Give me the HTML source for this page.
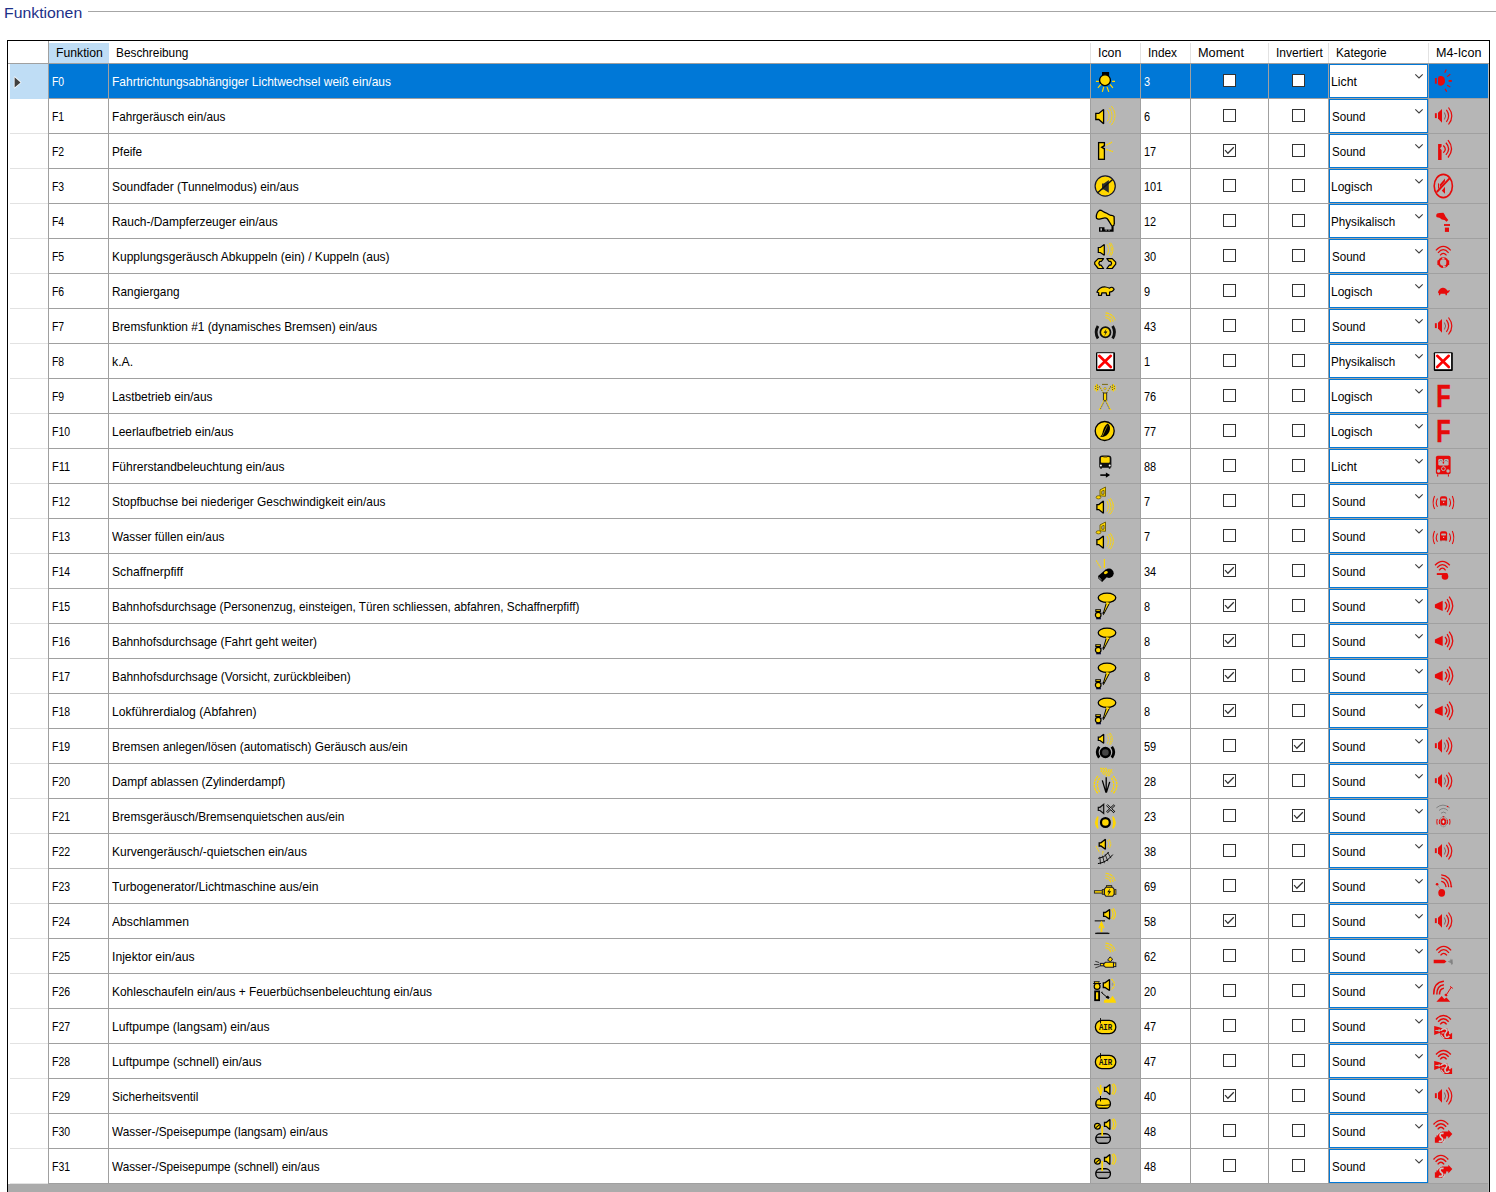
<!DOCTYPE html><html lang="de"><head><meta charset="utf-8"><title>Funktionen</title><style>
html,body{margin:0;padding:0;background:#fff}body{width:1496px;height:1192px;position:relative;overflow:hidden;font-family:"Liberation Sans",sans-serif;font-size:12.40px;color:#000}
.a,.t,svg{position:absolute}.t{white-space:nowrap;transform-origin:0 50%;display:block}.cb{position:absolute;width:11px;height:11px;border:1px solid #333;background:#fff}.cmb{position:absolute;left:1329px;width:97px;height:32px;border:1px solid #0078D7;background:#fff}
</style></head><body>
<span class="t" style="left:3.88px;top:-2.20px;height:30px;line-height:30px;transform:scaleX(1.0468);color:#1C3088;font-size:15.10px">Funktionen</span>
<div class="a" style="left:88px;top:11px;width:1408px;height:1px;background:#A6A6A6"></div>
<div class="a" style="left:7px;top:40px;width:1483px;height:1152px;background:#fff"></div>
<div class="a" style="left:8px;top:1184px;width:1480px;height:8px;background:#ABABAB"></div>
<div class="a" style="left:49px;top:43px;width:60px;height:20px;background:#BFDDF5"></div>
<div class="a" style="left:10px;top:64px;width:38px;height:35px;background:#BFDDF5"></div>
<div class="a" style="left:49px;top:64px;width:1439px;height:34px;background:#0078D7"></div>
<div class="a" style="left:1091px;top:99px;width:49px;height:1085px;background:#B6B6B6"></div>
<div class="a" style="left:1429px;top:99px;width:59px;height:1085px;background:#B6B6B6"></div>
<div class="a" style="left:1488px;top:64px;width:1px;height:1128px;background:#BBBBBB"></div>
<div class="a" style="left:8px;top:63px;width:1481px;height:1px;background:#A0A0A0"></div>
<div class="a" style="left:49px;top:98px;width:1439px;height:1px;background:#A0A0A0"></div>
<div class="a" style="left:10px;top:133px;width:38px;height:1px;background:#E2E2E2"></div>
<div class="a" style="left:49px;top:133px;width:1439px;height:1px;background:#A0A0A0"></div>
<div class="a" style="left:10px;top:168px;width:38px;height:1px;background:#E2E2E2"></div>
<div class="a" style="left:49px;top:168px;width:1439px;height:1px;background:#A0A0A0"></div>
<div class="a" style="left:10px;top:203px;width:38px;height:1px;background:#E2E2E2"></div>
<div class="a" style="left:49px;top:203px;width:1439px;height:1px;background:#A0A0A0"></div>
<div class="a" style="left:10px;top:238px;width:38px;height:1px;background:#E2E2E2"></div>
<div class="a" style="left:49px;top:238px;width:1439px;height:1px;background:#A0A0A0"></div>
<div class="a" style="left:10px;top:273px;width:38px;height:1px;background:#E2E2E2"></div>
<div class="a" style="left:49px;top:273px;width:1439px;height:1px;background:#A0A0A0"></div>
<div class="a" style="left:10px;top:308px;width:38px;height:1px;background:#E2E2E2"></div>
<div class="a" style="left:49px;top:308px;width:1439px;height:1px;background:#A0A0A0"></div>
<div class="a" style="left:10px;top:343px;width:38px;height:1px;background:#E2E2E2"></div>
<div class="a" style="left:49px;top:343px;width:1439px;height:1px;background:#A0A0A0"></div>
<div class="a" style="left:10px;top:378px;width:38px;height:1px;background:#E2E2E2"></div>
<div class="a" style="left:49px;top:378px;width:1439px;height:1px;background:#A0A0A0"></div>
<div class="a" style="left:10px;top:413px;width:38px;height:1px;background:#E2E2E2"></div>
<div class="a" style="left:49px;top:413px;width:1439px;height:1px;background:#A0A0A0"></div>
<div class="a" style="left:10px;top:448px;width:38px;height:1px;background:#E2E2E2"></div>
<div class="a" style="left:49px;top:448px;width:1439px;height:1px;background:#A0A0A0"></div>
<div class="a" style="left:10px;top:483px;width:38px;height:1px;background:#E2E2E2"></div>
<div class="a" style="left:49px;top:483px;width:1439px;height:1px;background:#A0A0A0"></div>
<div class="a" style="left:10px;top:518px;width:38px;height:1px;background:#E2E2E2"></div>
<div class="a" style="left:49px;top:518px;width:1439px;height:1px;background:#A0A0A0"></div>
<div class="a" style="left:10px;top:553px;width:38px;height:1px;background:#E2E2E2"></div>
<div class="a" style="left:49px;top:553px;width:1439px;height:1px;background:#A0A0A0"></div>
<div class="a" style="left:10px;top:588px;width:38px;height:1px;background:#E2E2E2"></div>
<div class="a" style="left:49px;top:588px;width:1439px;height:1px;background:#A0A0A0"></div>
<div class="a" style="left:10px;top:623px;width:38px;height:1px;background:#E2E2E2"></div>
<div class="a" style="left:49px;top:623px;width:1439px;height:1px;background:#A0A0A0"></div>
<div class="a" style="left:10px;top:658px;width:38px;height:1px;background:#E2E2E2"></div>
<div class="a" style="left:49px;top:658px;width:1439px;height:1px;background:#A0A0A0"></div>
<div class="a" style="left:10px;top:693px;width:38px;height:1px;background:#E2E2E2"></div>
<div class="a" style="left:49px;top:693px;width:1439px;height:1px;background:#A0A0A0"></div>
<div class="a" style="left:10px;top:728px;width:38px;height:1px;background:#E2E2E2"></div>
<div class="a" style="left:49px;top:728px;width:1439px;height:1px;background:#A0A0A0"></div>
<div class="a" style="left:10px;top:763px;width:38px;height:1px;background:#E2E2E2"></div>
<div class="a" style="left:49px;top:763px;width:1439px;height:1px;background:#A0A0A0"></div>
<div class="a" style="left:10px;top:798px;width:38px;height:1px;background:#E2E2E2"></div>
<div class="a" style="left:49px;top:798px;width:1439px;height:1px;background:#A0A0A0"></div>
<div class="a" style="left:10px;top:833px;width:38px;height:1px;background:#E2E2E2"></div>
<div class="a" style="left:49px;top:833px;width:1439px;height:1px;background:#A0A0A0"></div>
<div class="a" style="left:10px;top:868px;width:38px;height:1px;background:#E2E2E2"></div>
<div class="a" style="left:49px;top:868px;width:1439px;height:1px;background:#A0A0A0"></div>
<div class="a" style="left:10px;top:903px;width:38px;height:1px;background:#E2E2E2"></div>
<div class="a" style="left:49px;top:903px;width:1439px;height:1px;background:#A0A0A0"></div>
<div class="a" style="left:10px;top:938px;width:38px;height:1px;background:#E2E2E2"></div>
<div class="a" style="left:49px;top:938px;width:1439px;height:1px;background:#A0A0A0"></div>
<div class="a" style="left:10px;top:973px;width:38px;height:1px;background:#E2E2E2"></div>
<div class="a" style="left:49px;top:973px;width:1439px;height:1px;background:#A0A0A0"></div>
<div class="a" style="left:10px;top:1008px;width:38px;height:1px;background:#E2E2E2"></div>
<div class="a" style="left:49px;top:1008px;width:1439px;height:1px;background:#A0A0A0"></div>
<div class="a" style="left:10px;top:1043px;width:38px;height:1px;background:#E2E2E2"></div>
<div class="a" style="left:49px;top:1043px;width:1439px;height:1px;background:#A0A0A0"></div>
<div class="a" style="left:10px;top:1078px;width:38px;height:1px;background:#E2E2E2"></div>
<div class="a" style="left:49px;top:1078px;width:1439px;height:1px;background:#A0A0A0"></div>
<div class="a" style="left:10px;top:1113px;width:38px;height:1px;background:#E2E2E2"></div>
<div class="a" style="left:49px;top:1113px;width:1439px;height:1px;background:#A0A0A0"></div>
<div class="a" style="left:10px;top:1148px;width:38px;height:1px;background:#E2E2E2"></div>
<div class="a" style="left:49px;top:1148px;width:1439px;height:1px;background:#A0A0A0"></div>
<div class="a" style="left:10px;top:1183px;width:38px;height:1px;background:#E2E2E2"></div>
<div class="a" style="left:49px;top:1183px;width:1439px;height:1px;background:#A0A0A0"></div>
<div class="a" style="left:48px;top:41px;width:1px;height:1143px;background:#A0A0A0"></div>
<div class="a" style="left:108px;top:63px;width:1px;height:1121px;background:#A0A0A0"></div>
<div class="a" style="left:1090px;top:43px;width:1px;height:20px;background:#E2E2E2"></div>
<div class="a" style="left:1090px;top:63px;width:1px;height:1121px;background:#A0A0A0"></div>
<div class="a" style="left:1140px;top:43px;width:1px;height:20px;background:#E2E2E2"></div>
<div class="a" style="left:1140px;top:63px;width:1px;height:1121px;background:#A0A0A0"></div>
<div class="a" style="left:1190px;top:43px;width:1px;height:20px;background:#E2E2E2"></div>
<div class="a" style="left:1190px;top:63px;width:1px;height:1121px;background:#A0A0A0"></div>
<div class="a" style="left:1268px;top:43px;width:1px;height:20px;background:#E2E2E2"></div>
<div class="a" style="left:1268px;top:63px;width:1px;height:1121px;background:#A0A0A0"></div>
<div class="a" style="left:1328px;top:43px;width:1px;height:20px;background:#E2E2E2"></div>
<div class="a" style="left:1328px;top:63px;width:1px;height:1121px;background:#A0A0A0"></div>
<div class="a" style="left:1428px;top:43px;width:1px;height:20px;background:#E2E2E2"></div>
<div class="a" style="left:1428px;top:63px;width:1px;height:1121px;background:#A0A0A0"></div>
<div class="a" style="left:7px;top:40px;width:1483px;height:1px;background:#000"></div>
<div class="a" style="left:7px;top:40px;width:1px;height:1152px;background:#000"></div>
<div class="a" style="left:1489px;top:40px;width:1px;height:1152px;background:#000"></div>
<span class="t" style="left:55.98px;top:41.70px;height:22px;line-height:22px;transform:scaleX(0.9849)">Funktion</span>
<span class="t" style="left:115.51px;top:41.70px;height:22px;line-height:22px;transform:scaleX(0.9543)">Beschreibung</span>
<span class="t" style="left:1097.97px;top:41.70px;height:22px;line-height:22px;transform:scaleX(1.0000)">Icon</span>
<span class="t" style="left:1147.61px;top:41.70px;height:22px;line-height:22px;transform:scaleX(0.9574)">Index</span>
<span class="t" style="left:1197.74px;top:41.70px;height:22px;line-height:22px;transform:scaleX(1.0263)">Moment</span>
<span class="t" style="left:1276.20px;top:41.70px;height:22px;line-height:22px;transform:scaleX(0.9698)">Invertiert</span>
<span class="t" style="left:1336.42px;top:41.70px;height:22px;line-height:22px;transform:scaleX(0.9523)">Kategorie</span>
<span class="t" style="left:1435.75px;top:41.70px;height:22px;line-height:22px;transform:scaleX(1.0138)">M4-Icon</span>
<svg style="left:8px;top:64px" width="40" height="35" viewBox="0 0 40 35"><polygon points="6.6,13.2 12.5,18.4 6.6,23.6" fill="#404040" stroke="#f4f9fd" stroke-width="1.6" paint-order="stroke" stroke-linejoin="round"/></svg>
<span class="t" style="left:51.83px;top:65.00px;height:34px;line-height:34px;transform:scaleX(0.8412);color:#fff">F0</span>
<span class="t" style="left:111.80px;top:65.00px;height:34px;line-height:34px;transform:scaleX(0.9667);color:#fff">Fahrtrichtungsabhängiger Lichtwechsel weiß ein/aus</span>
<span class="t" style="left:1144.1px;top:65.00px;height:34px;line-height:34px;transform:scaleX(0.885);color:#fff">3</span>
<div class="cb" style="left:1223px;top:74px"></div>
<div class="cb" style="left:1292px;top:74px"></div>
<div class="cmb" style="top:64px"></div>
<span class="t" style="left:1330.58px;top:65.00px;height:34px;line-height:34px;transform:scaleX(0.9871)">Licht</span>
<svg style="left:1412px;top:72px" width="14" height="10" viewBox="0 0 14 10"><path d="M3.3,2.3L7,6L10.7,2.3" fill="none" stroke="#404040" stroke-width="1.12"/></svg>
<svg style="left:1090px;top:64px" width="50" height="35" viewBox="0 0 50 35"><rect x="12" y="8" width="7.1" height="4.2" fill="#000"/><circle cx="15" cy="16.2" r="5.4" fill="#FFD700" stroke="#000" stroke-width="1.3"/><path d="M5.9,17.4H8.9M22,17.4H25M10.9,20.3L7.9,23.9M20,20.3L22.9,23.9M13.8,22.9L12.3,27.9M17,22.9L18.8,27.9" stroke="#FFD700" stroke-width="1.2" fill="none"/></svg>
<svg style="left:1428px;top:64px" width="59" height="35" viewBox="0 0 59 35"><rect x="6.9" y="14" width="1.9" height="5.7" fill="#E60A0A"/><path d="M10,14.2 Q10,12 12.4,12 H13.2 Q17,12.6 17,16.85 Q17,21.1 13.2,21.7 H12.4 Q10,21.7 10,19.5Z" fill="#E60A0A"/><path d="M16.7,8.8L18.3,5.6M19.1,12.6L22.3,10.3M19.1,21.2L22.3,22.9M17,24.7L18.7,27.6" stroke="#E60A0A" stroke-width="1.15" fill="none"/><path d="M20.6,16.9H23.8" stroke="#E60A0A" stroke-width="1.9"/></svg>
<span class="t" style="left:51.83px;top:100.00px;height:34px;line-height:34px;transform:scaleX(0.8412)">F1</span>
<span class="t" style="left:111.82px;top:100.00px;height:34px;line-height:34px;transform:scaleX(0.9459)">Fahrgeräusch ein/aus</span>
<span class="t" style="left:1144.1px;top:100.00px;height:34px;line-height:34px;transform:scaleX(0.885)">6</span>
<div class="cb" style="left:1223px;top:109px"></div>
<div class="cb" style="left:1292px;top:109px"></div>
<div class="cmb" style="top:99px"></div>
<span class="t" style="left:1331.60px;top:100.00px;height:34px;line-height:34px;transform:scaleX(0.9336)">Sound</span>
<svg style="left:1412px;top:107px" width="14" height="10" viewBox="0 0 14 10"><path d="M3.3,2.3L7,6L10.7,2.3" fill="none" stroke="#404040" stroke-width="1.12"/></svg>
<svg style="left:1090px;top:99px" width="50" height="35" viewBox="0 0 50 35"><polygon points="5.8,14.4 8.8,14.4 13.6,10.4 13.6,24.7 8.8,20.5 5.8,20.5" fill="#FFD700" stroke="#000" stroke-width="1.3" stroke-linejoin="miter" stroke-miterlimit="1.6"/><path d="M17.3,11.1 Q20.9,16.7 17.3,22.3 M19.4,8.8 Q24.6,16.5 19.4,24.3 M21.4,7 Q28.6,16.5 21.4,26.1" fill="none" stroke="#FFD700" stroke-width="0.9" stroke-dasharray="4 0.5"/></svg>
<svg style="left:1428px;top:99px" width="59" height="35" viewBox="0 0 59 35"><rect x="6.9" y="14.2" width="1.9" height="4.9" fill="#E60A0A"/><polygon points="10,13.8 14,9.9 14,23.8 10,19.6" fill="#E60A0A"/><path d="M16.4,13.5 Q18.8,17 16.4,20.5" fill="none" stroke="#7c4444" stroke-width=".8"/><path d="M18.4,10.8 Q22.8,16.85 18.4,22.9 M20.5,8.5 Q27.1,17 20.5,25.5" fill="none" stroke="#E60A0A" stroke-width="1.2"/></svg>
<span class="t" style="left:51.83px;top:135.00px;height:34px;line-height:34px;transform:scaleX(0.8412)">F2</span>
<span class="t" style="left:111.82px;top:135.00px;height:34px;line-height:34px;transform:scaleX(0.9516)">Pfeife</span>
<span class="t" style="left:1144.1px;top:135.00px;height:34px;line-height:34px;transform:scaleX(0.885)">17</span>
<div class="cb" style="left:1223px;top:144px"><svg style="left:0;top:0" width="11" height="11" viewBox="0 0 11 11"><path d="M1.1,5.2L3.9,8.3L9.8,2.3" fill="none" stroke="#333" stroke-width="1.25"/></svg></div>
<div class="cb" style="left:1292px;top:144px"></div>
<div class="cmb" style="top:134px"></div>
<span class="t" style="left:1331.60px;top:135.00px;height:34px;line-height:34px;transform:scaleX(0.9336)">Sound</span>
<svg style="left:1412px;top:142px" width="14" height="10" viewBox="0 0 14 10"><path d="M3.3,2.3L7,6L10.7,2.3" fill="none" stroke="#404040" stroke-width="1.12"/></svg>
<svg style="left:1090px;top:134px" width="50" height="35" viewBox="0 0 50 35"><rect x="8.6" y="8.6" width="5.8" height="16.7" fill="#FFD700" stroke="#000" stroke-width="1.3"/><polygon points="15,10.5 10.4,13.2 15,15.9" fill="#000"/><polygon points="15.2,12.2 13,13.2 15.2,14.3" fill="#B6B6B6"/><path d="M16.2,11.2L22,8.2M16.2,15.4L22.9,17.6" stroke="#FFD700" stroke-width="1.3" stroke-dasharray="2.2 0.6" fill="none"/></svg>
<svg style="left:1428px;top:134px" width="59" height="35" viewBox="0 0 59 35"><path d="M10.1,10H13.6V12.6L12,14.2L13.6,16V25.9H10.1Z" fill="#E60A0A"/><path d="M15.3,11.5 Q19.3,15.2 15.3,18.8 M17.9,8.8 Q23.3,14.8 17.9,20.9 M20,6.2 Q27,14.8 20,23.5" fill="none" stroke="#E60A0A" stroke-width="1.3"/></svg>
<span class="t" style="left:51.83px;top:170.00px;height:34px;line-height:34px;transform:scaleX(0.8412)">F3</span>
<span class="t" style="left:111.80px;top:170.00px;height:34px;line-height:34px;transform:scaleX(0.9636)">Soundfader (Tunnelmodus) ein/aus</span>
<span class="t" style="left:1144.1px;top:170.00px;height:34px;line-height:34px;transform:scaleX(0.885)">101</span>
<div class="cb" style="left:1223px;top:179px"></div>
<div class="cb" style="left:1292px;top:179px"></div>
<div class="cmb" style="top:169px"></div>
<span class="t" style="left:1330.60px;top:170.00px;height:34px;line-height:34px;transform:scaleX(0.9702)">Logisch</span>
<svg style="left:1412px;top:177px" width="14" height="10" viewBox="0 0 14 10"><path d="M3.3,2.3L7,6L10.7,2.3" fill="none" stroke="#404040" stroke-width="1.12"/></svg>
<svg style="left:1090px;top:169px" width="50" height="35" viewBox="0 0 50 35"><circle cx="15.2" cy="17" r="10.1" fill="#FFD700" stroke="#16162a" stroke-width="1.2"/><polygon points="12,14.4 13.8,14.4 18.8,11.1 18.8,23.7 13.8,20.5 12,20.5" fill="#2a2a2a"/><path d="M22.6,10.5L7.4,24" stroke="#111" stroke-width="1.5"/></svg>
<svg style="left:1428px;top:169px" width="59" height="35" viewBox="0 0 59 35"><polygon points="11.8,15.4 17,9.6 17,24.8 11.8,19.8" fill="#E60A0A"/><rect x="10" y="14.4" width="1" height="5.2" fill="#E60A0A"/><path d="M22.6,8.2L9.8,23.8" stroke="#B6B6B6" stroke-width="3.4"/><path d="M21.8,9.2L8.8,23" stroke="#E60A0A" stroke-width="1.9"/><ellipse cx="15.3" cy="17" rx="9.1" ry="11.6" fill="none" stroke="#E60A0A" stroke-width="1.6"/></svg>
<span class="t" style="left:51.83px;top:205.00px;height:34px;line-height:34px;transform:scaleX(0.8412)">F4</span>
<span class="t" style="left:111.81px;top:205.00px;height:34px;line-height:34px;transform:scaleX(0.9625)">Rauch-/Dampferzeuger ein/aus</span>
<span class="t" style="left:1144.1px;top:205.00px;height:34px;line-height:34px;transform:scaleX(0.885)">12</span>
<div class="cb" style="left:1223px;top:214px"></div>
<div class="cb" style="left:1292px;top:214px"></div>
<div class="cmb" style="top:204px"></div>
<span class="t" style="left:1330.63px;top:205.00px;height:34px;line-height:34px;transform:scaleX(0.9409)">Physikalisch</span>
<svg style="left:1412px;top:212px" width="14" height="10" viewBox="0 0 14 10"><path d="M3.3,2.3L7,6L10.7,2.3" fill="none" stroke="#404040" stroke-width="1.12"/></svg>
<svg style="left:1090px;top:204px" width="50" height="35" viewBox="0 0 50 35"><path d="M9.7,6.2 C7.5,7.5 6.3,10 6.3,13 C6.2,15.2 8,15.3 10.6,14.8 C13.5,14.2 15.2,13 17,14.5 C19,16.5 20.2,20 22.3,22.4 C23.5,22 24.4,21 24.3,19.4 L24.1,12.6 C23,11.3 21.8,11.6 20.3,11.2 C18.5,10.6 17.5,9.3 15.9,8.8 C13.5,8.2 11.8,6 9.7,6.2Z" fill="#FFD700" stroke="#000" stroke-width="1.3"/><path d="M8.2,23.2H14.5V25.6H21.5V22.6H23.6V27.7H9V23.2Z" fill="#000"/><rect x="10.4" y="24.3" width="1.6" height="2.3" fill="#B6B6B6"/><rect x="15.5" y="25.6" width="1.3" height="1" fill="#B6B6B6"/><rect x="18.4" y="25.6" width="1.3" height="1" fill="#B6B6B6"/></svg>
<svg style="left:1428px;top:204px" width="59" height="35" viewBox="0 0 59 35"><path d="M8.2,11.4 C8.4,9.6 9.6,9 11.5,8.9 L15.3,8.8 C16.6,10 17,11.6 17.7,12.8 C18.6,14 19.6,14.9 20.3,15.9 L18.5,17.7 C17.6,17 17.2,16.2 16.4,15.9 L13.8,15.6 C12.8,15 12.2,14.2 11.4,13.8 L8.9,13.2 C8.3,12.6 8.1,12 8.2,11.4Z" fill="#E60A0A"/><rect x="16" y="20.1" width="6" height="1.8" fill="#E60A0A"/><rect x="16.9" y="23.6" width="4.1" height="4.3" fill="#E60A0A"/></svg>
<span class="t" style="left:51.83px;top:240.00px;height:34px;line-height:34px;transform:scaleX(0.8412)">F5</span>
<span class="t" style="left:111.80px;top:240.00px;height:34px;line-height:34px;transform:scaleX(0.9688)">Kupplungsgeräusch Abkuppeln (ein) / Kuppeln (aus)</span>
<span class="t" style="left:1144.1px;top:240.00px;height:34px;line-height:34px;transform:scaleX(0.885)">30</span>
<div class="cb" style="left:1223px;top:249px"></div>
<div class="cb" style="left:1292px;top:249px"></div>
<div class="cmb" style="top:239px"></div>
<span class="t" style="left:1331.60px;top:240.00px;height:34px;line-height:34px;transform:scaleX(0.9336)">Sound</span>
<svg style="left:1412px;top:247px" width="14" height="10" viewBox="0 0 14 10"><path d="M3.3,2.3L7,6L10.7,2.3" fill="none" stroke="#404040" stroke-width="1.12"/></svg>
<svg style="left:1090px;top:239px" width="50" height="35" viewBox="0 0 50 35"><polygon points="8.3,8.5 10.3,8.5 14.3,5.6 14.3,16.3 10.3,13.5 8.3,13.5" fill="#FFD700" stroke="#000" stroke-width="1.2" stroke-linejoin="miter" stroke-miterlimit="1.6"/><path d="M17.2,5.5 Q19.6,10.5 17.2,15.6 M19.2,4.2 Q23.4,10.5 19.2,16.9 M20.6,3.8 Q25.4,10.5 20.6,17.3" fill="none" stroke="#FFD700" stroke-width="1.0" stroke-dasharray="4 0.5"/><path d="M13.6,19.6H8.2L4.7,23.2V25.2L8.2,29.5H13.6L11,26.2H9.6L8.8,24.2L9.6,22.4H11.4Z" fill="#FFD700" stroke="#000" stroke-width="1.2" stroke-linejoin="round"/><path d="M16.8,19.6H22.2L25.7,23.2V25.2L22.2,29.5H16.8L19.4,26.2H20.8L21.6,24.2L20.8,22.4H19Z" fill="#FFD700" stroke="#000" stroke-width="1.2" stroke-linejoin="round"/></svg>
<svg style="left:1428px;top:239px" width="59" height="35" viewBox="0 0 59 35"><path d="M7.9,11.4 Q15.3,3.4 22.700000000000003,11.4 M10.0,13.8 Q15.3,7.6 20.6,13.8 M12.100000000000001,16.4 Q15.3,12.2 18.5,16.4" fill="none" stroke="#E60A0A" stroke-width="1.2"/><circle cx="15.3" cy="23.6" r="4.4" fill="none" stroke="#E60A0A" stroke-width="2.2"/><rect x="9.4" y="21.4" width="2.6" height="4.6" fill="#E60A0A"/><rect x="18.6" y="21.4" width="2.6" height="4.6" fill="#E60A0A"/><rect x="14.2" y="18.6" width="2.2" height="1.6" fill="#B6B6B6"/><rect x="15" y="26.8" width="2.6" height="1.8" fill="#B6B6B6"/></svg>
<span class="t" style="left:51.83px;top:275.00px;height:34px;line-height:34px;transform:scaleX(0.8412)">F6</span>
<span class="t" style="left:111.82px;top:275.00px;height:34px;line-height:34px;transform:scaleX(0.9519)">Rangiergang</span>
<span class="t" style="left:1144.1px;top:275.00px;height:34px;line-height:34px;transform:scaleX(0.885)">9</span>
<div class="cb" style="left:1223px;top:284px"></div>
<div class="cb" style="left:1292px;top:284px"></div>
<div class="cmb" style="top:274px"></div>
<span class="t" style="left:1330.60px;top:275.00px;height:34px;line-height:34px;transform:scaleX(0.9702)">Logisch</span>
<svg style="left:1412px;top:282px" width="14" height="10" viewBox="0 0 14 10"><path d="M3.3,2.3L7,6L10.7,2.3" fill="none" stroke="#404040" stroke-width="1.12"/></svg>
<svg style="left:1090px;top:274px" width="50" height="35" viewBox="0 0 50 35"><path d="M6.9,18.2 C7.6,16.2 8.6,15 10,14.2 C12,13 14,12.9 15.5,13 C17.2,13.1 18.6,13.7 19.6,14.2 C20.3,13.5 21.2,13.1 22,13.3 C23.2,13.6 24,14.6 24.1,15.4 C23.4,16.6 22.6,17.3 21.6,17.7 L19.5,18.2 L19.7,21.3 H16.6 L16.2,18.9 H11.8 L11.5,21.3 H8.5 L8.8,18.8 Z" fill="#FFD700" stroke="#000" stroke-width="1.2" stroke-linejoin="round"/></svg>
<svg style="left:1428px;top:274px" width="59" height="35" viewBox="0 0 59 35"><path d="M10,18.5 C10.4,16.8 11,15.8 12,15 C13.4,14 14.4,13.8 15.2,13.8 C16.6,13.9 17.6,14.5 18.3,15.2 L19.6,16.7 L22,16.1 L21,18.2 L19.2,19.2 L18.8,21.2 H17.6 L17.3,19.7 H12.6 L12,21.2 H10.9 L10.9,19.4Z" fill="#E60A0A"/></svg>
<span class="t" style="left:51.83px;top:310.00px;height:34px;line-height:34px;transform:scaleX(0.8412)">F7</span>
<span class="t" style="left:111.81px;top:310.00px;height:34px;line-height:34px;transform:scaleX(0.9580)">Bremsfunktion #1 (dynamisches Bremsen) ein/aus</span>
<span class="t" style="left:1144.1px;top:310.00px;height:34px;line-height:34px;transform:scaleX(0.885)">43</span>
<div class="cb" style="left:1223px;top:319px"></div>
<div class="cb" style="left:1292px;top:319px"></div>
<div class="cmb" style="top:309px"></div>
<span class="t" style="left:1331.60px;top:310.00px;height:34px;line-height:34px;transform:scaleX(0.9336)">Sound</span>
<svg style="left:1412px;top:317px" width="14" height="10" viewBox="0 0 14 10"><path d="M3.3,2.3L7,6L10.7,2.3" fill="none" stroke="#404040" stroke-width="1.12"/></svg>
<svg style="left:1090px;top:309px" width="50" height="35" viewBox="0 0 50 35"><path d="M15.6,3.9 Q22.8,4.6 25.3,11.4 M15.4,6.4 Q21.2,6.8 23.2,12.6 M15.4,8.8 Q19.6,9.2 21.2,13.5" fill="none" stroke="#FFD700" stroke-width="1.15" stroke-dasharray="3.5 0.5" opacity=".9"/><circle cx="15.4" cy="23.2" r="5.1" fill="#FFD700" stroke="#111" stroke-width="1.7"/><path d="M16.6,19.4L13.6,23.7H15.5L14.2,27.2L17.4,22.6H15.4Z" fill="#111"/><path d="M8,17 Q4.2,23.2 8,29.4" fill="none" stroke="#111" stroke-width="2.8"/><path d="M22.6,17 Q26.4,23.2 22.6,29.4" fill="none" stroke="#111" stroke-width="2.8"/></svg>
<svg style="left:1428px;top:309px" width="59" height="35" viewBox="0 0 59 35"><rect x="6.9" y="14.2" width="1.9" height="4.9" fill="#E60A0A"/><polygon points="10,13.8 14,9.9 14,23.8 10,19.6" fill="#E60A0A"/><path d="M16.4,13.5 Q18.8,17 16.4,20.5" fill="none" stroke="#7c4444" stroke-width=".8"/><path d="M18.4,10.8 Q22.8,16.85 18.4,22.9 M20.5,8.5 Q27.1,17 20.5,25.5" fill="none" stroke="#E60A0A" stroke-width="1.2"/></svg>
<span class="t" style="left:51.83px;top:345.00px;height:34px;line-height:34px;transform:scaleX(0.8412)">F8</span>
<span class="t" style="left:111.77px;top:345.00px;height:34px;line-height:34px;transform:scaleX(0.9932)">k.A.</span>
<span class="t" style="left:1144.1px;top:345.00px;height:34px;line-height:34px;transform:scaleX(0.885)">1</span>
<div class="cb" style="left:1223px;top:354px"></div>
<div class="cb" style="left:1292px;top:354px"></div>
<div class="cmb" style="top:344px"></div>
<span class="t" style="left:1330.63px;top:345.00px;height:34px;line-height:34px;transform:scaleX(0.9409)">Physikalisch</span>
<svg style="left:1412px;top:352px" width="14" height="10" viewBox="0 0 14 10"><path d="M3.3,2.3L7,6L10.7,2.3" fill="none" stroke="#404040" stroke-width="1.12"/></svg>
<svg style="left:1090px;top:344px" width="50" height="35" viewBox="0 0 50 35"><rect x="6" y="8.2" width="19" height="18.8" rx="1" fill="#000"/><rect x="7.3" y="9.2" width="16" height="16" fill="#fff"/><path d="M9.2,11.8L20.8,23M20.8,11.8L9.2,23" stroke="#FF0000" stroke-width="2.6" stroke-linecap="round"/></svg>
<svg style="left:1428px;top:344px" width="59" height="35" viewBox="0 0 59 35"><rect x="5.8" y="8.2" width="19" height="18.8" rx="1" fill="#000"/><rect x="7.1" y="9.2" width="16" height="16" fill="#fff"/><path d="M9.2,11.8L20.8,23M20.8,11.8L9.2,23" stroke="#FF0000" stroke-width="2.6" stroke-linecap="round"/></svg>
<span class="t" style="left:51.83px;top:380.00px;height:34px;line-height:34px;transform:scaleX(0.8412)">F9</span>
<span class="t" style="left:111.81px;top:380.00px;height:34px;line-height:34px;transform:scaleX(0.9600)">Lastbetrieb ein/aus</span>
<span class="t" style="left:1144.1px;top:380.00px;height:34px;line-height:34px;transform:scaleX(0.885)">76</span>
<div class="cb" style="left:1223px;top:389px"></div>
<div class="cb" style="left:1292px;top:389px"></div>
<div class="cmb" style="top:379px"></div>
<span class="t" style="left:1330.60px;top:380.00px;height:34px;line-height:34px;transform:scaleX(0.9702)">Logisch</span>
<svg style="left:1412px;top:387px" width="14" height="10" viewBox="0 0 14 10"><path d="M3.3,2.3L7,6L10.7,2.3" fill="none" stroke="#404040" stroke-width="1.12"/></svg>
<svg style="left:1090px;top:379px" width="50" height="35" viewBox="0 0 50 35"><path d="M12,5.4H17.9" stroke="#7a6a10" stroke-width="1"/><path d="M5,6.6V11.4M6.6,5V12.6M8.2,6.2V11.6M21.8,6.2V11.6M23.4,5V12.6M25,6.6V11.4" stroke="#FFD700" stroke-width="1.15"/><path d="M5.7,6.8V11.2M7.4,5.6V12M22.6,5.6V12M24.3,6.8V11.2" stroke="#2a2a10" stroke-width=".7" stroke-dasharray="1.1 1.1"/><path d="M8.6,8.6L10,7.4M21.4,8.6L20,7.4" stroke="#333" stroke-width=".8"/><path d="M13.7,13.8L9.9,7.4M16.4,13.8L20.1,7.4" stroke="#FFD700" stroke-width="1.2" stroke-dasharray="1.3 0.9"/><path d="M13.3,14L9.5,7.6M16.8,14L20.5,7.6" stroke="#222" stroke-width="0.7" stroke-dasharray="1 1.2"/><circle cx="15" cy="9.6" r="1.2" fill="#FFD700" stroke="#777" stroke-width=".5"/><rect x="13.4" y="14" width="3.3" height="7.4" fill="#FFD700" stroke="#222" stroke-width=".9"/><path d="M14,21.4L9.6,30.2M16,21.4L20.2,30.2" stroke="#FFD700" stroke-width="1.3" stroke-dasharray="1.4 0.9"/><path d="M14.6,21.8L10.2,30.4M15.4,21.8L19.6,30.4" stroke="#222" stroke-width="0.8" stroke-dasharray="1 1.1"/><path d="M8.8,30.4H10.8M19.2,30.4H21.2" stroke="#FFD700" stroke-width="1"/></svg>
<svg style="left:1428px;top:379px" width="59" height="35" viewBox="0 0 59 35"><text x="8.2" y="28.2" font-family="Liberation Sans, sans-serif" font-weight="700" font-size="30.6" fill="#E60A0A" stroke="#E60A0A" stroke-width=".5" textLength="14.4" lengthAdjust="spacingAndGlyphs">F</text></svg>
<span class="t" style="left:51.83px;top:415.00px;height:34px;line-height:34px;transform:scaleX(0.8468)">F10</span>
<span class="t" style="left:111.80px;top:415.00px;height:34px;line-height:34px;transform:scaleX(0.9645)">Leerlaufbetrieb ein/aus</span>
<span class="t" style="left:1144.1px;top:415.00px;height:34px;line-height:34px;transform:scaleX(0.885)">77</span>
<div class="cb" style="left:1223px;top:424px"></div>
<div class="cb" style="left:1292px;top:424px"></div>
<div class="cmb" style="top:414px"></div>
<span class="t" style="left:1330.60px;top:415.00px;height:34px;line-height:34px;transform:scaleX(0.9702)">Logisch</span>
<svg style="left:1412px;top:422px" width="14" height="10" viewBox="0 0 14 10"><path d="M3.3,2.3L7,6L10.7,2.3" fill="none" stroke="#404040" stroke-width="1.12"/></svg>
<svg style="left:1090px;top:414px" width="50" height="35" viewBox="0 0 50 35"><circle cx="14.7" cy="17" r="9.5" fill="#FFD700" stroke="#000" stroke-width="1.3"/><path d="M17.7,9.5 C20.2,11.4 20.6,14.4 19.4,17.6 C18.2,20.6 15.6,22.6 12.8,23 L10,22.8 C11.6,21.6 12,20.2 12.6,18.4 C13.4,15.6 14,12 17.7,9.5Z" fill="#000"/><path d="M17.4,11.5L12.2,22.4" stroke="#FFD700" stroke-width=".5"/></svg>
<svg style="left:1428px;top:414px" width="59" height="35" viewBox="0 0 59 35"><text x="8.2" y="28.2" font-family="Liberation Sans, sans-serif" font-weight="700" font-size="30.6" fill="#E60A0A" stroke="#E60A0A" stroke-width=".5" textLength="14.4" lengthAdjust="spacingAndGlyphs">F</text></svg>
<span class="t" style="left:51.78px;top:450.00px;height:34px;line-height:34px;transform:scaleX(0.8913)">F11</span>
<span class="t" style="left:111.80px;top:450.00px;height:34px;line-height:34px;transform:scaleX(0.9706)">Führerstandbeleuchtung ein/aus</span>
<span class="t" style="left:1144.1px;top:450.00px;height:34px;line-height:34px;transform:scaleX(0.885)">88</span>
<div class="cb" style="left:1223px;top:459px"></div>
<div class="cb" style="left:1292px;top:459px"></div>
<div class="cmb" style="top:449px"></div>
<span class="t" style="left:1330.58px;top:450.00px;height:34px;line-height:34px;transform:scaleX(0.9871)">Licht</span>
<svg style="left:1412px;top:457px" width="14" height="10" viewBox="0 0 14 10"><path d="M3.3,2.3L7,6L10.7,2.3" fill="none" stroke="#404040" stroke-width="1.12"/></svg>
<svg style="left:1090px;top:449px" width="50" height="35" viewBox="0 0 50 35"><path d="M9.2,9.6 Q9.2,6.6 12.2,6.5 H18.4 Q21.4,6.6 21.4,9.6 V17.6 Q21.4,18.8 20.3,18.8 V19.8 H18.8 V18.8 H11.8 V19.8 H10.3 V18.8 Q9.2,18.8 9.2,17.6Z" fill="#111"/><rect x="10.9" y="8.1" width="8.8" height="5.6" rx=".8" fill="#FFD700"/><rect x="13.4" y="7.4" width="3.8" height="1.3" fill="#8a6a00"/><circle cx="10.9" cy="16.4" r="1" fill="#fff"/><circle cx="19.7" cy="16.4" r="1" fill="#fff"/><path d="M10.3,26.1H18.5" stroke="#000" stroke-width="1.6"/><polygon points="15.9,23.4 20.1,26.1 15.9,28.8" fill="#000"/></svg>
<svg style="left:1428px;top:449px" width="59" height="35" viewBox="0 0 59 35"><rect x="7.9" y="6.8" width="14.7" height="18.5" rx="1.8" fill="#E60A0A"/><rect x="10.3" y="10" width="10.3" height="6.5" rx="1.2" fill="#B6B6B6"/><polygon points="14.2,9.8 16.6,9.8 15.4,12.4" fill="#E60A0A"/><ellipse cx="15.4" cy="13.7" rx=".8" ry="1.1" fill="#E60A0A"/><path d="M11.2,12.6L12.8,11.2L14.2,12.4M16.6,12.4L18,11.2L19.7,12.6" fill="none" stroke="#6a6a6a" stroke-width=".7"/><circle cx="10.6" cy="22" r="1.7" fill="#B6B6B6"/><circle cx="20" cy="22" r="1.7" fill="#B6B6B6"/><circle cx="15.4" cy="19.7" r="1.9" fill="#E60A0A" stroke="#B6B6B6" stroke-width="1"/><path d="M15.4,16.6V17.6" stroke="#B6B6B6" stroke-width=".8"/><path d="M9.7,25.3V27.6M20.4,25.3V27.6" stroke="#E60A0A" stroke-width="1"/></svg>
<span class="t" style="left:51.83px;top:485.00px;height:34px;line-height:34px;transform:scaleX(0.8468)">F12</span>
<span class="t" style="left:111.81px;top:485.00px;height:34px;line-height:34px;transform:scaleX(0.9614)">Stopfbuchse bei niederiger Geschwindigkeit ein/aus</span>
<span class="t" style="left:1144.1px;top:485.00px;height:34px;line-height:34px;transform:scaleX(0.885)">7</span>
<div class="cb" style="left:1223px;top:494px"></div>
<div class="cb" style="left:1292px;top:494px"></div>
<div class="cmb" style="top:484px"></div>
<span class="t" style="left:1331.60px;top:485.00px;height:34px;line-height:34px;transform:scaleX(0.9336)">Sound</span>
<svg style="left:1412px;top:492px" width="14" height="10" viewBox="0 0 14 10"><path d="M3.3,2.3L7,6L10.7,2.3" fill="none" stroke="#404040" stroke-width="1.12"/></svg>
<svg style="left:1090px;top:484px" width="50" height="35" viewBox="0 0 50 35"><path d="M10,12.4V5.9L15.5,3V12.3L10.8,11.9Z M11.8,7.2V10.3L14,10.2V6.3Z" fill="#FFD700" fill-rule="evenodd" stroke="#6b5a00" stroke-width=".9"/><ellipse cx="8.5" cy="13.3" rx="2.4" ry="1.6" fill="#FFD700" stroke="#6b5a00" stroke-width=".8"/><polygon points="6.9,20.6 8.8,20.6 13.4,16.9 13.4,29.2 8.8,25.6 6.9,25.6" fill="#FFD700" stroke="#000" stroke-width="1.3" stroke-linejoin="miter" stroke-miterlimit="1.6"/><path d="M16.9,17 Q19.6,22.3 16.9,27.6 M18.6,15 Q23.2,22.2 18.6,29.4 M20.2,14.2 Q26.4,22.2 20.2,30.2" fill="none" stroke="#FFD700" stroke-width="1.0" stroke-dasharray="4 0.5"/></svg>
<svg style="left:1428px;top:484px" width="59" height="35" viewBox="0 0 59 35"><path d="M12,14.2 Q12,12.2 14,12.2 H17 Q19.1,12.2 19.1,14.2 V21.4 H12Z" fill="#E60A0A"/><rect x="13.2" y="14.4" width="4.7" height="2" rx=".6" fill="#B6B6B6"/><rect x="15" y="17.8" width="1.2" height="1" fill="#ddd"/><path d="M13,21.4V22.2M18,21.4V22.2" stroke="#7a3030" stroke-width="1"/><path d="M9.5,14.4 Q7,18.6 9.5,22.8M21.3,14.4 Q23.8,18.6 21.3,22.8M6.6,12 Q3.6,18.5 6.6,25M24.3,12 Q27.3,18.5 24.3,25" fill="none" stroke="#E60A0A" stroke-width="1.05"/></svg>
<span class="t" style="left:51.83px;top:520.00px;height:34px;line-height:34px;transform:scaleX(0.8468)">F13</span>
<span class="t" style="left:111.82px;top:520.00px;height:34px;line-height:34px;transform:scaleX(0.9523)">Wasser füllen ein/aus</span>
<span class="t" style="left:1144.1px;top:520.00px;height:34px;line-height:34px;transform:scaleX(0.885)">7</span>
<div class="cb" style="left:1223px;top:529px"></div>
<div class="cb" style="left:1292px;top:529px"></div>
<div class="cmb" style="top:519px"></div>
<span class="t" style="left:1331.60px;top:520.00px;height:34px;line-height:34px;transform:scaleX(0.9336)">Sound</span>
<svg style="left:1412px;top:527px" width="14" height="10" viewBox="0 0 14 10"><path d="M3.3,2.3L7,6L10.7,2.3" fill="none" stroke="#404040" stroke-width="1.12"/></svg>
<svg style="left:1090px;top:519px" width="50" height="35" viewBox="0 0 50 35"><path d="M10,12.4V5.9L15.5,3V12.3L10.8,11.9Z M11.8,7.2V10.3L14,10.2V6.3Z" fill="#FFD700" fill-rule="evenodd" stroke="#6b5a00" stroke-width=".9"/><ellipse cx="8.5" cy="13.3" rx="2.4" ry="1.6" fill="#FFD700" stroke="#6b5a00" stroke-width=".8"/><polygon points="6.9,20.6 8.8,20.6 13.4,16.9 13.4,29.2 8.8,25.6 6.9,25.6" fill="#FFD700" stroke="#000" stroke-width="1.3" stroke-linejoin="miter" stroke-miterlimit="1.6"/><path d="M16.9,17 Q19.6,22.3 16.9,27.6 M18.6,15 Q23.2,22.2 18.6,29.4 M20.2,14.2 Q26.4,22.2 20.2,30.2" fill="none" stroke="#FFD700" stroke-width="1.0" stroke-dasharray="4 0.5"/></svg>
<svg style="left:1428px;top:519px" width="59" height="35" viewBox="0 0 59 35"><path d="M12,14.2 Q12,12.2 14,12.2 H17 Q19.1,12.2 19.1,14.2 V21.4 H12Z" fill="#E60A0A"/><rect x="13.2" y="14.4" width="4.7" height="2" rx=".6" fill="#B6B6B6"/><rect x="15" y="17.8" width="1.2" height="1" fill="#ddd"/><path d="M13,21.4V22.2M18,21.4V22.2" stroke="#7a3030" stroke-width="1"/><path d="M9.5,14.4 Q7,18.6 9.5,22.8M21.3,14.4 Q23.8,18.6 21.3,22.8M6.6,12 Q3.6,18.5 6.6,25M24.3,12 Q27.3,18.5 24.3,25" fill="none" stroke="#E60A0A" stroke-width="1.05"/></svg>
<span class="t" style="left:51.83px;top:555.00px;height:34px;line-height:34px;transform:scaleX(0.8468)">F14</span>
<span class="t" style="left:111.79px;top:555.00px;height:34px;line-height:34px;transform:scaleX(0.9788)">Schaffnerpfiff</span>
<span class="t" style="left:1144.1px;top:555.00px;height:34px;line-height:34px;transform:scaleX(0.885)">34</span>
<div class="cb" style="left:1223px;top:564px"><svg style="left:0;top:0" width="11" height="11" viewBox="0 0 11 11"><path d="M1.1,5.2L3.9,8.3L9.8,2.3" fill="none" stroke="#333" stroke-width="1.25"/></svg></div>
<div class="cb" style="left:1292px;top:564px"></div>
<div class="cmb" style="top:554px"></div>
<span class="t" style="left:1331.60px;top:555.00px;height:34px;line-height:34px;transform:scaleX(0.9336)">Sound</span>
<svg style="left:1412px;top:562px" width="14" height="10" viewBox="0 0 14 10"><path d="M3.3,2.3L7,6L10.7,2.3" fill="none" stroke="#404040" stroke-width="1.12"/></svg>
<svg style="left:1090px;top:554px" width="50" height="35" viewBox="0 0 50 35"><path d="M14.4,5V14.1" stroke="#FFD700" stroke-width="1.2"/><path d="M6.2,6.5L11.2,14.7" stroke="#FFD700" stroke-width="1.2" stroke-dasharray="1.5 0.8"/><circle cx="19" cy="19.2" r="4.7" fill="#000"/><polygon points="16.2,14.9 8.1,21.9 8.5,24.6 12.1,27.9 17.5,22.5" fill="#000"/><path d="M9,23.6L11.6,26" stroke="#ccc" stroke-width=".8"/><ellipse cx="15.9" cy="18.6" rx="2" ry="1.4" transform="rotate(-25 15.9 18.6)" fill="#FFD700"/></svg>
<svg style="left:1428px;top:554px" width="59" height="35" viewBox="0 0 59 35"><path d="M7.0,11.3 Q14.4,3.3000000000000003 21.8,11.3 M9.100000000000001,13.7 Q14.4,7.5 19.7,13.7 M11.2,16.3 Q14.4,12.100000000000001 17.6,16.3" fill="none" stroke="#E60A0A" stroke-width="1.3"/><rect x="8.8" y="19.1" width="10.6" height="1.9" fill="#E60A0A"/><circle cx="17" cy="22.5" r="3.3" fill="#E60A0A"/></svg>
<span class="t" style="left:51.83px;top:590.00px;height:34px;line-height:34px;transform:scaleX(0.8468)">F15</span>
<span class="t" style="left:111.82px;top:590.00px;height:34px;line-height:34px;transform:scaleX(0.9464)">Bahnhofsdurchsage (Personenzug, einsteigen, Türen schliessen, abfahren, Schaffnerpfiff)</span>
<span class="t" style="left:1144.1px;top:590.00px;height:34px;line-height:34px;transform:scaleX(0.885)">8</span>
<div class="cb" style="left:1223px;top:599px"><svg style="left:0;top:0" width="11" height="11" viewBox="0 0 11 11"><path d="M1.1,5.2L3.9,8.3L9.8,2.3" fill="none" stroke="#333" stroke-width="1.25"/></svg></div>
<div class="cb" style="left:1292px;top:599px"></div>
<div class="cmb" style="top:589px"></div>
<span class="t" style="left:1331.60px;top:590.00px;height:34px;line-height:34px;transform:scaleX(0.9336)">Sound</span>
<svg style="left:1412px;top:597px" width="14" height="10" viewBox="0 0 14 10"><path d="M3.3,2.3L7,6L10.7,2.3" fill="none" stroke="#404040" stroke-width="1.12"/></svg>
<svg style="left:1090px;top:589px" width="50" height="35" viewBox="0 0 50 35"><polygon points="16.6,13.2 20,13.2 13.5,25.6 13,25.2" fill="#FFD700" stroke="#000" stroke-width="1"/><ellipse cx="17" cy="8.8" rx="8.8" ry="4.6" fill="#FFD700" stroke="#000" stroke-width="1.3"/><path d="M16.9,13V14.2H19.4" stroke="#FFD700" stroke-width="1.4" fill="none"/><rect x="5.3" y="20.2" width="5.6" height="3" fill="#000"/><rect x="6.3" y="20.9" width="3.6" height=".9" fill="#FFD700"/><rect x="6.2" y="28.4" width="4.7" height="1.9" fill="#0a0a3a"/><circle cx="8.2" cy="26.1" r="2.8" fill="#FFD700" stroke="#000" stroke-width="1.2"/><path d="M11,24.4L13,23.8" stroke="#223" stroke-width=".8"/></svg>
<svg style="left:1428px;top:589px" width="59" height="35" viewBox="0 0 59 35"><polygon points="6.9,15.5 14.7,11.7 14.7,22 6.9,18.8" fill="#E60A0A"/><path d="M17,12.9 Q20.6,16.7 17,20.5 M19.1,10.2 Q23.7,16.7 19.1,23.2 M21.2,7.6 Q28.2,16.7 21.2,25.8" fill="none" stroke="#E60A0A" stroke-width="1.3"/></svg>
<span class="t" style="left:51.83px;top:625.00px;height:34px;line-height:34px;transform:scaleX(0.8468)">F16</span>
<span class="t" style="left:111.81px;top:625.00px;height:34px;line-height:34px;transform:scaleX(0.9542)">Bahnhofsdurchsage (Fahrt geht weiter)</span>
<span class="t" style="left:1144.1px;top:625.00px;height:34px;line-height:34px;transform:scaleX(0.885)">8</span>
<div class="cb" style="left:1223px;top:634px"><svg style="left:0;top:0" width="11" height="11" viewBox="0 0 11 11"><path d="M1.1,5.2L3.9,8.3L9.8,2.3" fill="none" stroke="#333" stroke-width="1.25"/></svg></div>
<div class="cb" style="left:1292px;top:634px"></div>
<div class="cmb" style="top:624px"></div>
<span class="t" style="left:1331.60px;top:625.00px;height:34px;line-height:34px;transform:scaleX(0.9336)">Sound</span>
<svg style="left:1412px;top:632px" width="14" height="10" viewBox="0 0 14 10"><path d="M3.3,2.3L7,6L10.7,2.3" fill="none" stroke="#404040" stroke-width="1.12"/></svg>
<svg style="left:1090px;top:624px" width="50" height="35" viewBox="0 0 50 35"><polygon points="16.6,13.2 20,13.2 13.5,25.6 13,25.2" fill="#FFD700" stroke="#000" stroke-width="1"/><ellipse cx="17" cy="8.8" rx="8.8" ry="4.6" fill="#FFD700" stroke="#000" stroke-width="1.3"/><path d="M16.9,13V14.2H19.4" stroke="#FFD700" stroke-width="1.4" fill="none"/><rect x="5.3" y="20.2" width="5.6" height="3" fill="#000"/><rect x="6.3" y="20.9" width="3.6" height=".9" fill="#FFD700"/><rect x="6.2" y="28.4" width="4.7" height="1.9" fill="#0a0a3a"/><circle cx="8.2" cy="26.1" r="2.8" fill="#FFD700" stroke="#000" stroke-width="1.2"/><path d="M11,24.4L13,23.8" stroke="#223" stroke-width=".8"/></svg>
<svg style="left:1428px;top:624px" width="59" height="35" viewBox="0 0 59 35"><polygon points="6.9,15.5 14.7,11.7 14.7,22 6.9,18.8" fill="#E60A0A"/><path d="M17,12.9 Q20.6,16.7 17,20.5 M19.1,10.2 Q23.7,16.7 19.1,23.2 M21.2,7.6 Q28.2,16.7 21.2,25.8" fill="none" stroke="#E60A0A" stroke-width="1.3"/></svg>
<span class="t" style="left:51.83px;top:660.00px;height:34px;line-height:34px;transform:scaleX(0.8468)">F17</span>
<span class="t" style="left:111.81px;top:660.00px;height:34px;line-height:34px;transform:scaleX(0.9573)">Bahnhofsdurchsage (Vorsicht, zurückbleiben)</span>
<span class="t" style="left:1144.1px;top:660.00px;height:34px;line-height:34px;transform:scaleX(0.885)">8</span>
<div class="cb" style="left:1223px;top:669px"><svg style="left:0;top:0" width="11" height="11" viewBox="0 0 11 11"><path d="M1.1,5.2L3.9,8.3L9.8,2.3" fill="none" stroke="#333" stroke-width="1.25"/></svg></div>
<div class="cb" style="left:1292px;top:669px"></div>
<div class="cmb" style="top:659px"></div>
<span class="t" style="left:1331.60px;top:660.00px;height:34px;line-height:34px;transform:scaleX(0.9336)">Sound</span>
<svg style="left:1412px;top:667px" width="14" height="10" viewBox="0 0 14 10"><path d="M3.3,2.3L7,6L10.7,2.3" fill="none" stroke="#404040" stroke-width="1.12"/></svg>
<svg style="left:1090px;top:659px" width="50" height="35" viewBox="0 0 50 35"><polygon points="16.6,13.2 20,13.2 13.5,25.6 13,25.2" fill="#FFD700" stroke="#000" stroke-width="1"/><ellipse cx="17" cy="8.8" rx="8.8" ry="4.6" fill="#FFD700" stroke="#000" stroke-width="1.3"/><path d="M16.9,13V14.2H19.4" stroke="#FFD700" stroke-width="1.4" fill="none"/><rect x="5.3" y="20.2" width="5.6" height="3" fill="#000"/><rect x="6.3" y="20.9" width="3.6" height=".9" fill="#FFD700"/><rect x="6.2" y="28.4" width="4.7" height="1.9" fill="#0a0a3a"/><circle cx="8.2" cy="26.1" r="2.8" fill="#FFD700" stroke="#000" stroke-width="1.2"/><path d="M11,24.4L13,23.8" stroke="#223" stroke-width=".8"/></svg>
<svg style="left:1428px;top:659px" width="59" height="35" viewBox="0 0 59 35"><polygon points="6.9,15.5 14.7,11.7 14.7,22 6.9,18.8" fill="#E60A0A"/><path d="M17,12.9 Q20.6,16.7 17,20.5 M19.1,10.2 Q23.7,16.7 19.1,23.2 M21.2,7.6 Q28.2,16.7 21.2,25.8" fill="none" stroke="#E60A0A" stroke-width="1.3"/></svg>
<span class="t" style="left:51.83px;top:695.00px;height:34px;line-height:34px;transform:scaleX(0.8468)">F18</span>
<span class="t" style="left:111.79px;top:695.00px;height:34px;line-height:34px;transform:scaleX(0.9815)">Lokführerdialog (Abfahren)</span>
<span class="t" style="left:1144.1px;top:695.00px;height:34px;line-height:34px;transform:scaleX(0.885)">8</span>
<div class="cb" style="left:1223px;top:704px"><svg style="left:0;top:0" width="11" height="11" viewBox="0 0 11 11"><path d="M1.1,5.2L3.9,8.3L9.8,2.3" fill="none" stroke="#333" stroke-width="1.25"/></svg></div>
<div class="cb" style="left:1292px;top:704px"></div>
<div class="cmb" style="top:694px"></div>
<span class="t" style="left:1331.60px;top:695.00px;height:34px;line-height:34px;transform:scaleX(0.9336)">Sound</span>
<svg style="left:1412px;top:702px" width="14" height="10" viewBox="0 0 14 10"><path d="M3.3,2.3L7,6L10.7,2.3" fill="none" stroke="#404040" stroke-width="1.12"/></svg>
<svg style="left:1090px;top:694px" width="50" height="35" viewBox="0 0 50 35"><polygon points="16.6,13.2 20,13.2 13.5,25.6 13,25.2" fill="#FFD700" stroke="#000" stroke-width="1"/><ellipse cx="17" cy="8.8" rx="8.8" ry="4.6" fill="#FFD700" stroke="#000" stroke-width="1.3"/><path d="M16.9,13V14.2H19.4" stroke="#FFD700" stroke-width="1.4" fill="none"/><rect x="5.3" y="20.2" width="5.6" height="3" fill="#000"/><rect x="6.3" y="20.9" width="3.6" height=".9" fill="#FFD700"/><rect x="6.2" y="28.4" width="4.7" height="1.9" fill="#0a0a3a"/><circle cx="8.2" cy="26.1" r="2.8" fill="#FFD700" stroke="#000" stroke-width="1.2"/><path d="M11,24.4L13,23.8" stroke="#223" stroke-width=".8"/></svg>
<svg style="left:1428px;top:694px" width="59" height="35" viewBox="0 0 59 35"><polygon points="6.9,15.5 14.7,11.7 14.7,22 6.9,18.8" fill="#E60A0A"/><path d="M17,12.9 Q20.6,16.7 17,20.5 M19.1,10.2 Q23.7,16.7 19.1,23.2 M21.2,7.6 Q28.2,16.7 21.2,25.8" fill="none" stroke="#E60A0A" stroke-width="1.3"/></svg>
<span class="t" style="left:51.83px;top:730.00px;height:34px;line-height:34px;transform:scaleX(0.8468)">F19</span>
<span class="t" style="left:111.81px;top:730.00px;height:34px;line-height:34px;transform:scaleX(0.9557)">Bremsen anlegen/lösen (automatisch) Geräusch aus/ein</span>
<span class="t" style="left:1144.1px;top:730.00px;height:34px;line-height:34px;transform:scaleX(0.885)">59</span>
<div class="cb" style="left:1223px;top:739px"></div>
<div class="cb" style="left:1292px;top:739px"><svg style="left:0;top:0" width="11" height="11" viewBox="0 0 11 11"><path d="M1.1,5.2L3.9,8.3L9.8,2.3" fill="none" stroke="#333" stroke-width="1.25"/></svg></div>
<div class="cmb" style="top:729px"></div>
<span class="t" style="left:1331.60px;top:730.00px;height:34px;line-height:34px;transform:scaleX(0.9336)">Sound</span>
<svg style="left:1412px;top:737px" width="14" height="10" viewBox="0 0 14 10"><path d="M3.3,2.3L7,6L10.7,2.3" fill="none" stroke="#404040" stroke-width="1.12"/></svg>
<svg style="left:1090px;top:729px" width="50" height="35" viewBox="0 0 50 35"><polygon points="8.3,8.2 10,8.2 13.7,5.2 13.7,14.3 10,11.5 8.3,11.5" fill="#FFD700" stroke="#000" stroke-width="1.2" stroke-linejoin="miter" stroke-miterlimit="1.6"/><path d="M17.2,5.4 Q19.4,10 17.2,14.6 M19,4.4 Q22.6,10 19,15.6 M20.2,4.1 Q24.6,10 20.2,15.9" fill="none" stroke="#FFD700" stroke-width="0.9" stroke-dasharray="2 0.6"/><circle cx="15.4" cy="23.5" r="4.5" fill="#444" stroke="#000" stroke-width="2.4"/><path d="M9.2,17.8 Q5.2,23.3 9.2,28.6" fill="none" stroke="#000" stroke-width="2.8"/><path d="M21.8,17.8 Q25.8,23.3 21.8,28.6" fill="none" stroke="#000" stroke-width="2.8"/></svg>
<svg style="left:1428px;top:729px" width="59" height="35" viewBox="0 0 59 35"><rect x="6.9" y="14.2" width="1.9" height="4.9" fill="#E60A0A"/><polygon points="10,13.8 14,9.9 14,23.8 10,19.6" fill="#E60A0A"/><path d="M16.4,13.5 Q18.8,17 16.4,20.5" fill="none" stroke="#7c4444" stroke-width=".8"/><path d="M18.4,10.8 Q22.8,16.85 18.4,22.9 M20.5,8.5 Q27.1,17 20.5,25.5" fill="none" stroke="#E60A0A" stroke-width="1.2"/></svg>
<span class="t" style="left:51.83px;top:765.00px;height:34px;line-height:34px;transform:scaleX(0.8468)">F20</span>
<span class="t" style="left:111.80px;top:765.00px;height:34px;line-height:34px;transform:scaleX(0.9638)">Dampf ablassen (Zylinderdampf)</span>
<span class="t" style="left:1144.1px;top:765.00px;height:34px;line-height:34px;transform:scaleX(0.885)">28</span>
<div class="cb" style="left:1223px;top:774px"><svg style="left:0;top:0" width="11" height="11" viewBox="0 0 11 11"><path d="M1.1,5.2L3.9,8.3L9.8,2.3" fill="none" stroke="#333" stroke-width="1.25"/></svg></div>
<div class="cb" style="left:1292px;top:774px"></div>
<div class="cmb" style="top:764px"></div>
<span class="t" style="left:1331.60px;top:765.00px;height:34px;line-height:34px;transform:scaleX(0.9336)">Sound</span>
<svg style="left:1412px;top:772px" width="14" height="10" viewBox="0 0 14 10"><path d="M3.3,2.3L7,6L10.7,2.3" fill="none" stroke="#404040" stroke-width="1.12"/></svg>
<svg style="left:1090px;top:764px" width="50" height="35" viewBox="0 0 50 35"><path d="M10.2,4.4H17.4M11,5.9H23.2M10.6,7.4H22.6M12,8.9H22.6M13.2,10.3H21M15.8,11.6H20" stroke="#FFD700" stroke-width="1.1" stroke-dasharray="1.5 0.9"/><path d="M7.9,12 Q0.6,20.8 7.9,29.6M9.7,13.8 Q5,20.8 9.7,27.9M23.2,12 Q30.6,20.8 23.2,29.6M21.4,13.8 Q26.2,20.8 21.4,27.9" fill="none" stroke="#FFD700" stroke-width="1.3" stroke-dasharray="2.6 0.7"/><path d="M16.2,13.2V28.3M12.3,16.4L16,28.6M19.7,17.9L16.4,28.6" fill="none" stroke="#000" stroke-width="1.3"/></svg>
<svg style="left:1428px;top:764px" width="59" height="35" viewBox="0 0 59 35"><rect x="6.9" y="14.2" width="1.9" height="4.9" fill="#E60A0A"/><polygon points="10,13.8 14,9.9 14,23.8 10,19.6" fill="#E60A0A"/><path d="M16.4,13.5 Q18.8,17 16.4,20.5" fill="none" stroke="#7c4444" stroke-width=".8"/><path d="M18.4,10.8 Q22.8,16.85 18.4,22.9 M20.5,8.5 Q27.1,17 20.5,25.5" fill="none" stroke="#E60A0A" stroke-width="1.2"/></svg>
<span class="t" style="left:51.83px;top:800.00px;height:34px;line-height:34px;transform:scaleX(0.8468)">F21</span>
<span class="t" style="left:111.81px;top:800.00px;height:34px;line-height:34px;transform:scaleX(0.9553)">Bremsgeräusch/Bremsenquietschen aus/ein</span>
<span class="t" style="left:1144.1px;top:800.00px;height:34px;line-height:34px;transform:scaleX(0.885)">23</span>
<div class="cb" style="left:1223px;top:809px"></div>
<div class="cb" style="left:1292px;top:809px"><svg style="left:0;top:0" width="11" height="11" viewBox="0 0 11 11"><path d="M1.1,5.2L3.9,8.3L9.8,2.3" fill="none" stroke="#333" stroke-width="1.25"/></svg></div>
<div class="cmb" style="top:799px"></div>
<span class="t" style="left:1331.60px;top:800.00px;height:34px;line-height:34px;transform:scaleX(0.9336)">Sound</span>
<svg style="left:1412px;top:807px" width="14" height="10" viewBox="0 0 14 10"><path d="M3.3,2.3L7,6L10.7,2.3" fill="none" stroke="#404040" stroke-width="1.12"/></svg>
<svg style="left:1090px;top:799px" width="50" height="35" viewBox="0 0 50 35"><polygon points="8.3,8.3 10,8.3 13.7,5.2 13.7,14.5 10,11.5 8.3,11.5" fill="#a6a6a6" stroke="#111" stroke-width="1.2"/><path d="M16.9,6L24.5,13.4M24.5,6L16.9,13.4" stroke="#111" stroke-width="2.2"/><path d="M16.9,6L24.5,13.4M24.5,6L16.9,13.4" stroke="#c8c8c8" stroke-width=".9"/><circle cx="15.4" cy="23.5" r="4.4" fill="#FFD700" stroke="#000" stroke-width="2.2"/><path d="M7.9,17.6 Q3.4,23.5 7.9,29.4 Q6.6,23.5 7.9,17.6Z" fill="#FFD700" stroke="#FFD700" stroke-width="1.2"/><path d="M22.9,17.6 Q27.4,23.5 22.9,29.4 Q24.2,23.5 22.9,17.6Z" fill="#FFD700" stroke="#FFD700" stroke-width="1.2"/></svg>
<svg style="left:1428px;top:799px" width="59" height="35" viewBox="0 0 59 35"><path d="M8.4,8.8 Q15,3.4 21.6,8.8M11,11.5 Q15.4,7.4 19.8,11.5M13,14.2 Q15.5,12 18.1,14.2" fill="none" stroke="#6a6a6a" stroke-width=".7"/><circle cx="19.6" cy="7.5" r=".8" fill="#E60A0A"/><circle cx="15.4" cy="17.8" r=".7" fill="#E60A0A"/><ellipse cx="15.4" cy="22.7" rx="3.7" ry="5.1" fill="none" stroke="#6a5050" stroke-width=".6" stroke-dasharray="1.4 .7"/><ellipse cx="15.4" cy="22.7" rx="1.9" ry="2.6" fill="none" stroke="#E60A0A" stroke-width="1.8"/><ellipse cx="15.4" cy="22.8" rx=".9" ry="1.2" fill="#d8d8d8"/><path d="M9.2,20 Q8.4,22.8 9.2,25.6M11.6,20.6 Q11,22.8 11.6,25M21.6,20 Q22.4,22.8 21.6,25.6M19.2,20.6 Q19.8,22.8 19.2,25" fill="none" stroke="#E60A0A" stroke-width="1"/></svg>
<span class="t" style="left:51.83px;top:835.00px;height:34px;line-height:34px;transform:scaleX(0.8468)">F22</span>
<span class="t" style="left:111.80px;top:835.00px;height:34px;line-height:34px;transform:scaleX(0.9692)">Kurvengeräusch/-quietschen ein/aus</span>
<span class="t" style="left:1144.1px;top:835.00px;height:34px;line-height:34px;transform:scaleX(0.885)">38</span>
<div class="cb" style="left:1223px;top:844px"></div>
<div class="cb" style="left:1292px;top:844px"></div>
<div class="cmb" style="top:834px"></div>
<span class="t" style="left:1331.60px;top:835.00px;height:34px;line-height:34px;transform:scaleX(0.9336)">Sound</span>
<svg style="left:1412px;top:842px" width="14" height="10" viewBox="0 0 14 10"><path d="M3.3,2.3L7,6L10.7,2.3" fill="none" stroke="#404040" stroke-width="1.12"/></svg>
<svg style="left:1090px;top:834px" width="50" height="35" viewBox="0 0 50 35"><polygon points="9.2,8.8 10.9,8.8 15.4,5.3 15.4,15.3 10.9,12 9.2,12" fill="#FFD700" stroke="#000" stroke-width="1.3" stroke-linejoin="miter" stroke-miterlimit="1.6"/><path d="M17.6,6 Q19.6,10 17.6,14 M19,5.2 Q22.6,10 19,14.8" fill="none" stroke="#FFD700" stroke-width="0.9" stroke-dasharray="2 0.6"/><path d="M6.2,12.3L9.7,18.5M13.2,17.3L12.3,20.2" stroke="#FFD700" stroke-width="1.2" stroke-dasharray="1.4 0.9"/><path d="M7.9,29.6 Q16.5,28.6 22.8,20.6M8.2,24.4 Q14,24 18.8,18.2" fill="none" stroke="#000" stroke-width="1"/><path d="M9.8,22.8L10.6,30.2M12.6,21.8L14.4,29.2M15.2,20.4L17.8,27.2M17.6,18.4L21,24.2" stroke="#111" stroke-width=".85"/></svg>
<svg style="left:1428px;top:834px" width="59" height="35" viewBox="0 0 59 35"><rect x="6.9" y="14.2" width="1.9" height="4.9" fill="#E60A0A"/><polygon points="10,13.8 14,9.9 14,23.8 10,19.6" fill="#E60A0A"/><path d="M16.4,13.5 Q18.8,17 16.4,20.5" fill="none" stroke="#7c4444" stroke-width=".8"/><path d="M18.4,10.8 Q22.8,16.85 18.4,22.9 M20.5,8.5 Q27.1,17 20.5,25.5" fill="none" stroke="#E60A0A" stroke-width="1.2"/></svg>
<span class="t" style="left:51.83px;top:870.00px;height:34px;line-height:34px;transform:scaleX(0.8468)">F23</span>
<span class="t" style="left:111.79px;top:870.00px;height:34px;line-height:34px;transform:scaleX(0.9782)">Turbogenerator/Lichtmaschine aus/ein</span>
<span class="t" style="left:1144.1px;top:870.00px;height:34px;line-height:34px;transform:scaleX(0.885)">69</span>
<div class="cb" style="left:1223px;top:879px"></div>
<div class="cb" style="left:1292px;top:879px"><svg style="left:0;top:0" width="11" height="11" viewBox="0 0 11 11"><path d="M1.1,5.2L3.9,8.3L9.8,2.3" fill="none" stroke="#333" stroke-width="1.25"/></svg></div>
<div class="cmb" style="top:869px"></div>
<span class="t" style="left:1331.60px;top:870.00px;height:34px;line-height:34px;transform:scaleX(0.9336)">Sound</span>
<svg style="left:1412px;top:877px" width="14" height="10" viewBox="0 0 14 10"><path d="M3.3,2.3L7,6L10.7,2.3" fill="none" stroke="#404040" stroke-width="1.12"/></svg>
<svg style="left:1090px;top:869px" width="50" height="35" viewBox="0 0 50 35"><path d="M15.6,4.3 Q22.8,5.0 25.3,11.8 M15.4,6.800000000000001 Q21.2,7.2 23.2,13.0 M15.4,9.200000000000001 Q19.6,9.6 21.2,13.9" fill="none" stroke="#FFD700" stroke-width="1.15" stroke-dasharray="3.5 0.5" opacity=".9"/><rect x="4.4" y="21.7" width="8" height="2.4" fill="#FFD700" stroke="#222" stroke-width=".9"/><rect x="12.3" y="20.6" width="2.2" height="4.7" fill="#d4b000" stroke="#222" stroke-width=".9"/><rect x="16.5" y="16.6" width="5.2" height="1.8" fill="#e0bb00" stroke="#222" stroke-width=".9"/><rect x="24.1" y="20.6" width="1.8" height="4.7" fill="#FFD700" stroke="#222" stroke-width=".9"/><polygon points="15.9,18.2 22.6,18.2 24.1,20.3 24.1,25.3 22.6,27.3 15.9,27.3 14.4,25.3 14.4,20.3" fill="#FFD700" stroke="#1a1a2a" stroke-width="1.1"/><path d="M20.2,19.2L17.2,23.2H19L17.8,26.8L21.2,22.2H19.2Z" fill="#111"/></svg>
<svg style="left:1428px;top:869px" width="59" height="35" viewBox="0 0 59 35"><path d="M13.2,5.9 Q22.6,6.6 23.3,17.7M13.2,8.9 Q19.8,9.6 20.7,18.1M13.2,12.4 Q17.2,12.8 18.1,18.1" fill="none" stroke="#E60A0A" stroke-width="1.3"/><circle cx="23.3" cy="17.6" r=".9" fill="#E60A0A"/><path d="M9.1,15.3L12.6,20.4" stroke="#888" stroke-width=".6"/><circle cx="9.1" cy="15.3" r="1.3" fill="#E60A0A"/><ellipse cx="13.7" cy="23.8" rx="3.4" ry="3.9" fill="#E60A0A"/></svg>
<span class="t" style="left:51.83px;top:905.00px;height:34px;line-height:34px;transform:scaleX(0.8468)">F24</span>
<span class="t" style="left:111.79px;top:905.00px;height:34px;line-height:34px;transform:scaleX(0.9806)">Abschlammen</span>
<span class="t" style="left:1144.1px;top:905.00px;height:34px;line-height:34px;transform:scaleX(0.885)">58</span>
<div class="cb" style="left:1223px;top:914px"><svg style="left:0;top:0" width="11" height="11" viewBox="0 0 11 11"><path d="M1.1,5.2L3.9,8.3L9.8,2.3" fill="none" stroke="#333" stroke-width="1.25"/></svg></div>
<div class="cb" style="left:1292px;top:914px"></div>
<div class="cmb" style="top:904px"></div>
<span class="t" style="left:1331.60px;top:905.00px;height:34px;line-height:34px;transform:scaleX(0.9336)">Sound</span>
<svg style="left:1412px;top:912px" width="14" height="10" viewBox="0 0 14 10"><path d="M3.3,2.3L7,6L10.7,2.3" fill="none" stroke="#404040" stroke-width="1.12"/></svg>
<svg style="left:1090px;top:904px" width="50" height="35" viewBox="0 0 50 35"><polygon points="13.6,8.5 15.3,8.5 19.6,5.6 19.6,15.1 15.3,12.3 13.6,12.3" fill="#FFD700" stroke="#000" stroke-width="1.3" stroke-linejoin="miter" stroke-miterlimit="1.6"/><path d="M21.4,5.4 Q24.6,10 21.4,14.6 M23,4.4 Q28,10 23,15.5" fill="none" stroke="#FFD700" stroke-width="1.1" stroke-dasharray="3 0"/><path d="M4.7,16.8H15" stroke="#444" stroke-width="1.6"/><path d="M11.5,28V19" stroke="#FFD700" stroke-width="1.8"/><path d="M9,24.3L11.5,18.4L14,24.3" fill="none" stroke="#FFD700" stroke-width="1.3"/><path d="M5.2,29.4H19.4" stroke="#111" stroke-width="1.3"/><path d="M6.6,28.6H18" stroke="#555" stroke-width=".7"/></svg>
<svg style="left:1428px;top:904px" width="59" height="35" viewBox="0 0 59 35"><rect x="6.9" y="14.2" width="1.9" height="4.9" fill="#E60A0A"/><polygon points="10,13.8 14,9.9 14,23.8 10,19.6" fill="#E60A0A"/><path d="M16.4,13.5 Q18.8,17 16.4,20.5" fill="none" stroke="#7c4444" stroke-width=".8"/><path d="M18.4,10.8 Q22.8,16.85 18.4,22.9 M20.5,8.5 Q27.1,17 20.5,25.5" fill="none" stroke="#E60A0A" stroke-width="1.2"/></svg>
<span class="t" style="left:51.83px;top:940.00px;height:34px;line-height:34px;transform:scaleX(0.8468)">F25</span>
<span class="t" style="left:111.78px;top:940.00px;height:34px;line-height:34px;transform:scaleX(0.9835)">Injektor ein/aus</span>
<span class="t" style="left:1144.1px;top:940.00px;height:34px;line-height:34px;transform:scaleX(0.885)">62</span>
<div class="cb" style="left:1223px;top:949px"></div>
<div class="cb" style="left:1292px;top:949px"></div>
<div class="cmb" style="top:939px"></div>
<span class="t" style="left:1331.60px;top:940.00px;height:34px;line-height:34px;transform:scaleX(0.9336)">Sound</span>
<svg style="left:1412px;top:947px" width="14" height="10" viewBox="0 0 14 10"><path d="M3.3,2.3L7,6L10.7,2.3" fill="none" stroke="#404040" stroke-width="1.12"/></svg>
<svg style="left:1090px;top:939px" width="50" height="35" viewBox="0 0 50 35"><path d="M15.6,4.1 Q22.8,4.8 25.3,11.6 M15.4,6.6000000000000005 Q21.2,7.0 23.2,12.799999999999999 M15.4,9.0 Q19.6,9.399999999999999 21.2,13.7" fill="none" stroke="#FFD700" stroke-width="1.15" stroke-dasharray="3.5 0.5" opacity=".9"/><path d="M5.3,22.3L9.1,23.5M4.1,25.6H9.1M5.3,28.8L9.7,27.3" stroke="#333" stroke-width="1"/><polygon points="17.6,21.2 20,17.9 22.6,20 20.6,22.8" fill="#FFD700" stroke="#1a1a2a" stroke-width="1"/><rect x="10.3" y="24.4" width="3.5" height="2.4" fill="#FFD700" stroke="#1a1a2a" stroke-width="1.1"/><polygon points="13.8,24.9 15.4,23.3 23.5,23.3 23.5,28.2 15.4,28.2 13.8,26.8" fill="#FFD700" stroke="#1a1a2a" stroke-width="1.1"/><rect x="23.5" y="23.8" width="2.3" height="3.8" fill="#FFD700" stroke="#1a1a2a" stroke-width="1"/></svg>
<svg style="left:1428px;top:939px" width="59" height="35" viewBox="0 0 59 35"><path d="M8.299999999999999,11.4 Q15.7,3.4 23.1,11.4 M10.399999999999999,13.8 Q15.7,7.6 21.0,13.8 M12.5,16.4 Q15.7,12.2 18.9,16.4" fill="none" stroke="#E60A0A" stroke-width="1.3"/><polygon points="5.7,20.8 16.3,20.8 18.5,22.5 16.3,24.2 5.7,24.2" fill="#E60A0A"/><polygon points="19.6,22.5 24.6,20.2 25,25.2 23.2,24.6" fill="#8a8a8a"/><path d="M22.8,19.8L23.8,26" stroke="#777" stroke-width=".6"/></svg>
<span class="t" style="left:51.83px;top:975.00px;height:34px;line-height:34px;transform:scaleX(0.8468)">F26</span>
<span class="t" style="left:111.80px;top:975.00px;height:34px;line-height:34px;transform:scaleX(0.9629)">Kohleschaufeln ein/aus + Feuerbüchsenbeleuchtung ein/aus</span>
<span class="t" style="left:1144.1px;top:975.00px;height:34px;line-height:34px;transform:scaleX(0.885)">20</span>
<div class="cb" style="left:1223px;top:984px"></div>
<div class="cb" style="left:1292px;top:984px"></div>
<div class="cmb" style="top:974px"></div>
<span class="t" style="left:1331.60px;top:975.00px;height:34px;line-height:34px;transform:scaleX(0.9336)">Sound</span>
<svg style="left:1412px;top:982px" width="14" height="10" viewBox="0 0 14 10"><path d="M3.3,2.3L7,6L10.7,2.3" fill="none" stroke="#404040" stroke-width="1.12"/></svg>
<svg style="left:1090px;top:974px" width="50" height="35" viewBox="0 0 50 35"><path d="M3.6,7.2H9.8L9,9H10.9V9.9H3.2V9H4.4Z" fill="#000"/><rect x="5" y="7.9" width="3.6" height=".9" fill="#FFD700"/><circle cx="7.1" cy="12.4" r="2.9" fill="#FFD700" stroke="#000" stroke-width="1.2"/><rect x="5.1" y="17.4" width="4" height="8.8" fill="#FFD700" stroke="#000" stroke-width="1.8"/><polygon points="13.3,8.8 15,8.8 19.5,5.4 19.5,16.5 15,13.5 13.3,13.5" fill="#FFD700" stroke="#000" stroke-width="1.3" stroke-linejoin="miter" stroke-miterlimit="1.6"/><path d="M21.4,5 Q27.4,10.3 21.4,15.6" fill="none" stroke="#FFD700" stroke-width="1.2" stroke-dasharray="2.2 0.8"/><ellipse cx="22.6" cy="10.3" rx=".8" ry="1.8" fill="#999"/><path d="M11.8,18.8L17,23.2" stroke="#000" stroke-width="1"/><path d="M11.2,18.4L12.6,18.2" stroke="#000" stroke-width="1"/><polygon points="15.6,23.6 17.8,21.6 19.6,23.4 18.4,25" fill="#000"/><path d="M13.8,28.8L14.1,26.2L16.5,25.2L19.6,25.8L22.6,21.8L25.3,26.1L26.1,28.8Z" fill="#FFD700"/></svg>
<svg style="left:1428px;top:974px" width="59" height="35" viewBox="0 0 59 35"><path d="M5.7,20.5 Q5.6,8.2 15.9,7.3M8.8,20.5 Q8.8,11.6 15.9,10.8M11.5,20.5 Q11.6,14.8 15.9,14.3" fill="none" stroke="#E60A0A" stroke-width="1.5"/><polygon points="8.4,27.7 13.7,22.1 16.3,24.9 18.5,23.5 22.2,27.7" fill="#E60A0A"/><path d="M18.2,21L23.3,13.2M22,12.4L24.8,14.4" stroke="#E60A0A" stroke-width="1"/><polygon points="16.2,21 18,19.6 19.6,21.4 18.2,22.6" fill="#E60A0A"/></svg>
<span class="t" style="left:51.83px;top:1010.00px;height:34px;line-height:34px;transform:scaleX(0.8468)">F27</span>
<span class="t" style="left:111.79px;top:1010.00px;height:34px;line-height:34px;transform:scaleX(0.9816)">Luftpumpe (langsam) ein/aus</span>
<span class="t" style="left:1144.1px;top:1010.00px;height:34px;line-height:34px;transform:scaleX(0.885)">47</span>
<div class="cb" style="left:1223px;top:1019px"></div>
<div class="cb" style="left:1292px;top:1019px"></div>
<div class="cmb" style="top:1009px"></div>
<span class="t" style="left:1331.60px;top:1010.00px;height:34px;line-height:34px;transform:scaleX(0.9336)">Sound</span>
<svg style="left:1412px;top:1017px" width="14" height="10" viewBox="0 0 14 10"><path d="M3.3,2.3L7,6L10.7,2.3" fill="none" stroke="#404040" stroke-width="1.12"/></svg>
<svg style="left:1090px;top:1009px" width="50" height="35" viewBox="0 0 50 35"><rect x="5.4" y="11.3" width="20.4" height="13.3" rx="6.4" fill="#FFD700" stroke="#000" stroke-width="1.3"/><path d="M10.5,9.1V14.4" stroke="#000" stroke-width=".9"/><text x="15.6" y="20.9" font-family="Liberation Mono, monospace" font-weight="700" font-size="8.4" text-anchor="middle" textLength="13.4" lengthAdjust="spacingAndGlyphs" fill="#111">AIR</text></svg>
<svg style="left:1428px;top:1009px" width="59" height="35" viewBox="0 0 59 35"><path d="M8.0,10.4 Q15.4,2.4 22.8,10.4 M10.100000000000001,12.8 Q15.4,6.6 20.7,12.8 M12.2,15.4 Q15.4,11.2 18.6,15.4" fill="none" stroke="#E60A0A" stroke-width="1.45"/><polygon points="6.2,17 10.4,18 14.8,19.6 14.6,23.4 10.8,24.2 6.2,26" fill="#E60A0A"/><path d="M7.4,21.5H11" stroke="#B6B6B6" stroke-width="1.1"/><polygon points="10.6,19.7 13.2,21.5 10.6,23.3" fill="#B6B6B6"/><polygon points="24.1,23.8 24.1,30 15.3,30 19.4,27.6" fill="#E60A0A"/><circle cx="17.2" cy="24.2" r="5" fill="#E60A0A"/><path d="M13,21.6 Q14.6,19.2 17.2,19.8 Q20.2,20.8 18,23.6 Q16,26 17.6,27.8 Q19.6,29.2 21.4,26.8" fill="none" stroke="#c8c8c8" stroke-width="1.5"/><path d="M19.6,20.4 Q22.6,22 21.6,25.2M13.2,25.6 Q14.4,28.6 16.4,28.8" fill="none" stroke="#c6c6c6" stroke-width="1.2"/><path d="M13.6,24.2 Q15.4,23.2 16.6,24.2" fill="none" stroke="#c8c8c8" stroke-width="1.1"/></svg>
<span class="t" style="left:51.83px;top:1045.00px;height:34px;line-height:34px;transform:scaleX(0.8468)">F28</span>
<span class="t" style="left:111.78px;top:1045.00px;height:34px;line-height:34px;transform:scaleX(0.9830)">Luftpumpe (schnell) ein/aus</span>
<span class="t" style="left:1144.1px;top:1045.00px;height:34px;line-height:34px;transform:scaleX(0.885)">47</span>
<div class="cb" style="left:1223px;top:1054px"></div>
<div class="cb" style="left:1292px;top:1054px"></div>
<div class="cmb" style="top:1044px"></div>
<span class="t" style="left:1331.60px;top:1045.00px;height:34px;line-height:34px;transform:scaleX(0.9336)">Sound</span>
<svg style="left:1412px;top:1052px" width="14" height="10" viewBox="0 0 14 10"><path d="M3.3,2.3L7,6L10.7,2.3" fill="none" stroke="#404040" stroke-width="1.12"/></svg>
<svg style="left:1090px;top:1044px" width="50" height="35" viewBox="0 0 50 35"><rect x="5.4" y="11.3" width="20.4" height="13.3" rx="6.4" fill="#FFD700" stroke="#000" stroke-width="1.3"/><path d="M10.5,9.1V14.4" stroke="#000" stroke-width=".9"/><text x="15.6" y="20.9" font-family="Liberation Mono, monospace" font-weight="700" font-size="8.4" text-anchor="middle" textLength="13.4" lengthAdjust="spacingAndGlyphs" fill="#111">AIR</text></svg>
<svg style="left:1428px;top:1044px" width="59" height="35" viewBox="0 0 59 35"><path d="M8.0,10.4 Q15.4,2.4 22.8,10.4 M10.100000000000001,12.8 Q15.4,6.6 20.7,12.8 M12.2,15.4 Q15.4,11.2 18.6,15.4" fill="none" stroke="#E60A0A" stroke-width="1.45"/><polygon points="6.2,17 10.4,18 14.8,19.6 14.6,23.4 10.8,24.2 6.2,26" fill="#E60A0A"/><path d="M7.4,21.5H11" stroke="#B6B6B6" stroke-width="1.1"/><polygon points="10.6,19.7 13.2,21.5 10.6,23.3" fill="#B6B6B6"/><polygon points="24.1,23.8 24.1,30 15.3,30 19.4,27.6" fill="#E60A0A"/><circle cx="17.2" cy="24.2" r="5" fill="#E60A0A"/><path d="M13,21.6 Q14.6,19.2 17.2,19.8 Q20.2,20.8 18,23.6 Q16,26 17.6,27.8 Q19.6,29.2 21.4,26.8" fill="none" stroke="#c8c8c8" stroke-width="1.5"/><path d="M19.6,20.4 Q22.6,22 21.6,25.2M13.2,25.6 Q14.4,28.6 16.4,28.8" fill="none" stroke="#c6c6c6" stroke-width="1.2"/><path d="M13.6,24.2 Q15.4,23.2 16.6,24.2" fill="none" stroke="#c8c8c8" stroke-width="1.1"/></svg>
<span class="t" style="left:51.83px;top:1080.00px;height:34px;line-height:34px;transform:scaleX(0.8468)">F29</span>
<span class="t" style="left:111.81px;top:1080.00px;height:34px;line-height:34px;transform:scaleX(0.9565)">Sicherheitsventil</span>
<span class="t" style="left:1144.1px;top:1080.00px;height:34px;line-height:34px;transform:scaleX(0.885)">40</span>
<div class="cb" style="left:1223px;top:1089px"><svg style="left:0;top:0" width="11" height="11" viewBox="0 0 11 11"><path d="M1.1,5.2L3.9,8.3L9.8,2.3" fill="none" stroke="#333" stroke-width="1.25"/></svg></div>
<div class="cb" style="left:1292px;top:1089px"></div>
<div class="cmb" style="top:1079px"></div>
<span class="t" style="left:1331.60px;top:1080.00px;height:34px;line-height:34px;transform:scaleX(0.9336)">Sound</span>
<svg style="left:1412px;top:1087px" width="14" height="10" viewBox="0 0 14 10"><path d="M3.3,2.3L7,6L10.7,2.3" fill="none" stroke="#404040" stroke-width="1.12"/></svg>
<svg style="left:1090px;top:1079px" width="50" height="35" viewBox="0 0 50 35"><path d="M10.6,5.9V15.2" stroke="#FFD700" stroke-width="1.6"/><path d="M7.4,8.2L10.6,15.4L12.9,8.8" fill="none" stroke="#FFD700" stroke-width="1.2"/><polygon points="14.5,8.5 16.2,8.5 19.9,5.5 19.9,15.4 16.2,12.3 14.5,12.3" fill="#FFD700" stroke="#000" stroke-width="1.3" stroke-linejoin="miter" stroke-miterlimit="1.6"/><path d="M22,5.2 Q25,10.2 22,15.2 M23.4,4.6 Q28.4,10.2 23.4,15.7" fill="none" stroke="#FFD700" stroke-width="1.1" stroke-dasharray="3 0"/><rect x="5.8" y="19.8" width="14.6" height="9.5" rx="4.6" fill="#FFD700" stroke="#000" stroke-width="1.4"/><path d="M6.4,25.9 Q13,27 20,25.9" fill="none" stroke="#000" stroke-width="1"/><path d="M10.5,17V22.4" stroke="#000" stroke-width="1"/></svg>
<svg style="left:1428px;top:1079px" width="59" height="35" viewBox="0 0 59 35"><rect x="6.9" y="14.2" width="1.9" height="4.9" fill="#E60A0A"/><polygon points="10,13.8 14,9.9 14,23.8 10,19.6" fill="#E60A0A"/><path d="M16.4,13.5 Q18.8,17 16.4,20.5" fill="none" stroke="#7c4444" stroke-width=".8"/><path d="M18.4,10.8 Q22.8,16.85 18.4,22.9 M20.5,8.5 Q27.1,17 20.5,25.5" fill="none" stroke="#E60A0A" stroke-width="1.2"/></svg>
<span class="t" style="left:51.83px;top:1115.00px;height:34px;line-height:34px;transform:scaleX(0.8468)">F30</span>
<span class="t" style="left:111.82px;top:1115.00px;height:34px;line-height:34px;transform:scaleX(0.9514)">Wasser-/Speisepumpe (langsam) ein/aus</span>
<span class="t" style="left:1144.1px;top:1115.00px;height:34px;line-height:34px;transform:scaleX(0.885)">48</span>
<div class="cb" style="left:1223px;top:1124px"></div>
<div class="cb" style="left:1292px;top:1124px"></div>
<div class="cmb" style="top:1114px"></div>
<span class="t" style="left:1331.60px;top:1115.00px;height:34px;line-height:34px;transform:scaleX(0.9336)">Sound</span>
<svg style="left:1412px;top:1122px" width="14" height="10" viewBox="0 0 14 10"><path d="M3.3,2.3L7,6L10.7,2.3" fill="none" stroke="#404040" stroke-width="1.12"/></svg>
<svg style="left:1090px;top:1114px" width="50" height="35" viewBox="0 0 50 35"><circle cx="7.4" cy="12.3" r="2.9" fill="#FFD700" stroke="#000" stroke-width="1.2"/><path d="M5.6,13.8L9.2,10.8" stroke="#000" stroke-width="1.1"/><path d="M12.2,12V21.7" stroke="#FFD700" stroke-width="1.7"/><polygon points="14.5,8.5 16.2,8.5 19.9,5.4 19.9,15.4 16.2,12.3 14.5,12.3" fill="#FFD700" stroke="#000" stroke-width="1.3" stroke-linejoin="miter" stroke-miterlimit="1.6"/><path d="M22,5.2 Q25,10.2 22,15.2 M23.4,4.6 Q28.4,10.2 23.4,15.7" fill="none" stroke="#FFD700" stroke-width="1.1" stroke-dasharray="3 0"/><path d="M5.9,23.4H20.3V25.6 Q20,29.3 16,29.3 H10.2 Q6.2,29.3 5.9,25.6Z" fill="#a4a4a4"/><rect x="5.8" y="19.8" width="14.6" height="9.5" rx="4.6" fill="none" stroke="#000" stroke-width="1.4"/><path d="M5.9,23.3H20.3" stroke="#000" stroke-width="1.2"/><path d="M12.2,19V21.7" stroke="#FFD700" stroke-width="1.7"/></svg>
<svg style="left:1428px;top:1114px" width="59" height="35" viewBox="0 0 59 35"><path d="M5.5,10.4 Q12.9,2.4 20.3,10.4 M7.6000000000000005,12.8 Q12.9,6.6 18.2,12.8 M9.7,15.4 Q12.9,11.2 16.1,15.4" fill="none" stroke="#E60A0A" stroke-width="1.4"/><polygon points="13.8,17.6 20.3,17.6 20.3,15.7 24.3,20 20.3,24.5 20.3,22.6 16.6,22.6 13.8,20" fill="#E60A0A"/><polygon points="6.9,23.2 9.4,23.4 15,28.8 6.9,28.8" fill="#E60A0A"/><circle cx="13.2" cy="23.2" r="4.9" fill="#E60A0A"/><path d="M9.2,21.4 Q9.6,19 12,18.4M17.2,24.6 Q17,27.6 14.4,28.2" fill="none" stroke="#c4c4c4" stroke-width="1.3"/><path d="M15.6,19.4 Q12,18.8 12,21.4 Q12.2,23 13.6,23.6 Q15.2,24.6 14.4,26.4 Q13.4,28 10.8,27.2" fill="none" stroke="#cacaca" stroke-width="1.7"/></svg>
<span class="t" style="left:51.83px;top:1150.00px;height:34px;line-height:34px;transform:scaleX(0.8468)">F31</span>
<span class="t" style="left:111.82px;top:1150.00px;height:34px;line-height:34px;transform:scaleX(0.9499)">Wasser-/Speisepumpe (schnell) ein/aus</span>
<span class="t" style="left:1144.1px;top:1150.00px;height:34px;line-height:34px;transform:scaleX(0.885)">48</span>
<div class="cb" style="left:1223px;top:1159px"></div>
<div class="cb" style="left:1292px;top:1159px"></div>
<div class="cmb" style="top:1149px"></div>
<span class="t" style="left:1331.60px;top:1150.00px;height:34px;line-height:34px;transform:scaleX(0.9336)">Sound</span>
<svg style="left:1412px;top:1157px" width="14" height="10" viewBox="0 0 14 10"><path d="M3.3,2.3L7,6L10.7,2.3" fill="none" stroke="#404040" stroke-width="1.12"/></svg>
<svg style="left:1090px;top:1149px" width="50" height="35" viewBox="0 0 50 35"><circle cx="7.4" cy="12.3" r="2.9" fill="#FFD700" stroke="#000" stroke-width="1.2"/><path d="M5.6,13.8L9.2,10.8" stroke="#000" stroke-width="1.1"/><path d="M12.2,12V21.7" stroke="#FFD700" stroke-width="1.7"/><polygon points="14.5,8.5 16.2,8.5 19.9,5.4 19.9,15.4 16.2,12.3 14.5,12.3" fill="#FFD700" stroke="#000" stroke-width="1.3" stroke-linejoin="miter" stroke-miterlimit="1.6"/><path d="M22,5.2 Q25,10.2 22,15.2 M23.4,4.6 Q28.4,10.2 23.4,15.7" fill="none" stroke="#FFD700" stroke-width="1.1" stroke-dasharray="3 0"/><path d="M5.9,23.4H20.3V25.6 Q20,29.3 16,29.3 H10.2 Q6.2,29.3 5.9,25.6Z" fill="#a4a4a4"/><rect x="5.8" y="19.8" width="14.6" height="9.5" rx="4.6" fill="none" stroke="#000" stroke-width="1.4"/><path d="M5.9,23.3H20.3" stroke="#000" stroke-width="1.2"/><path d="M12.2,19V21.7" stroke="#FFD700" stroke-width="1.7"/></svg>
<svg style="left:1428px;top:1149px" width="59" height="35" viewBox="0 0 59 35"><path d="M5.5,10.4 Q12.9,2.4 20.3,10.4 M7.6000000000000005,12.8 Q12.9,6.6 18.2,12.8 M9.7,15.4 Q12.9,11.2 16.1,15.4" fill="none" stroke="#E60A0A" stroke-width="1.4"/><polygon points="13.8,17.6 20.3,17.6 20.3,15.7 24.3,20 20.3,24.5 20.3,22.6 16.6,22.6 13.8,20" fill="#E60A0A"/><polygon points="6.9,23.2 9.4,23.4 15,28.8 6.9,28.8" fill="#E60A0A"/><circle cx="13.2" cy="23.2" r="4.9" fill="#E60A0A"/><path d="M9.2,21.4 Q9.6,19 12,18.4M17.2,24.6 Q17,27.6 14.4,28.2" fill="none" stroke="#c4c4c4" stroke-width="1.3"/><path d="M15.6,19.4 Q12,18.8 12,21.4 Q12.2,23 13.6,23.6 Q15.2,24.6 14.4,26.4 Q13.4,28 10.8,27.2" fill="none" stroke="#cacaca" stroke-width="1.7"/></svg>
</body></html>
